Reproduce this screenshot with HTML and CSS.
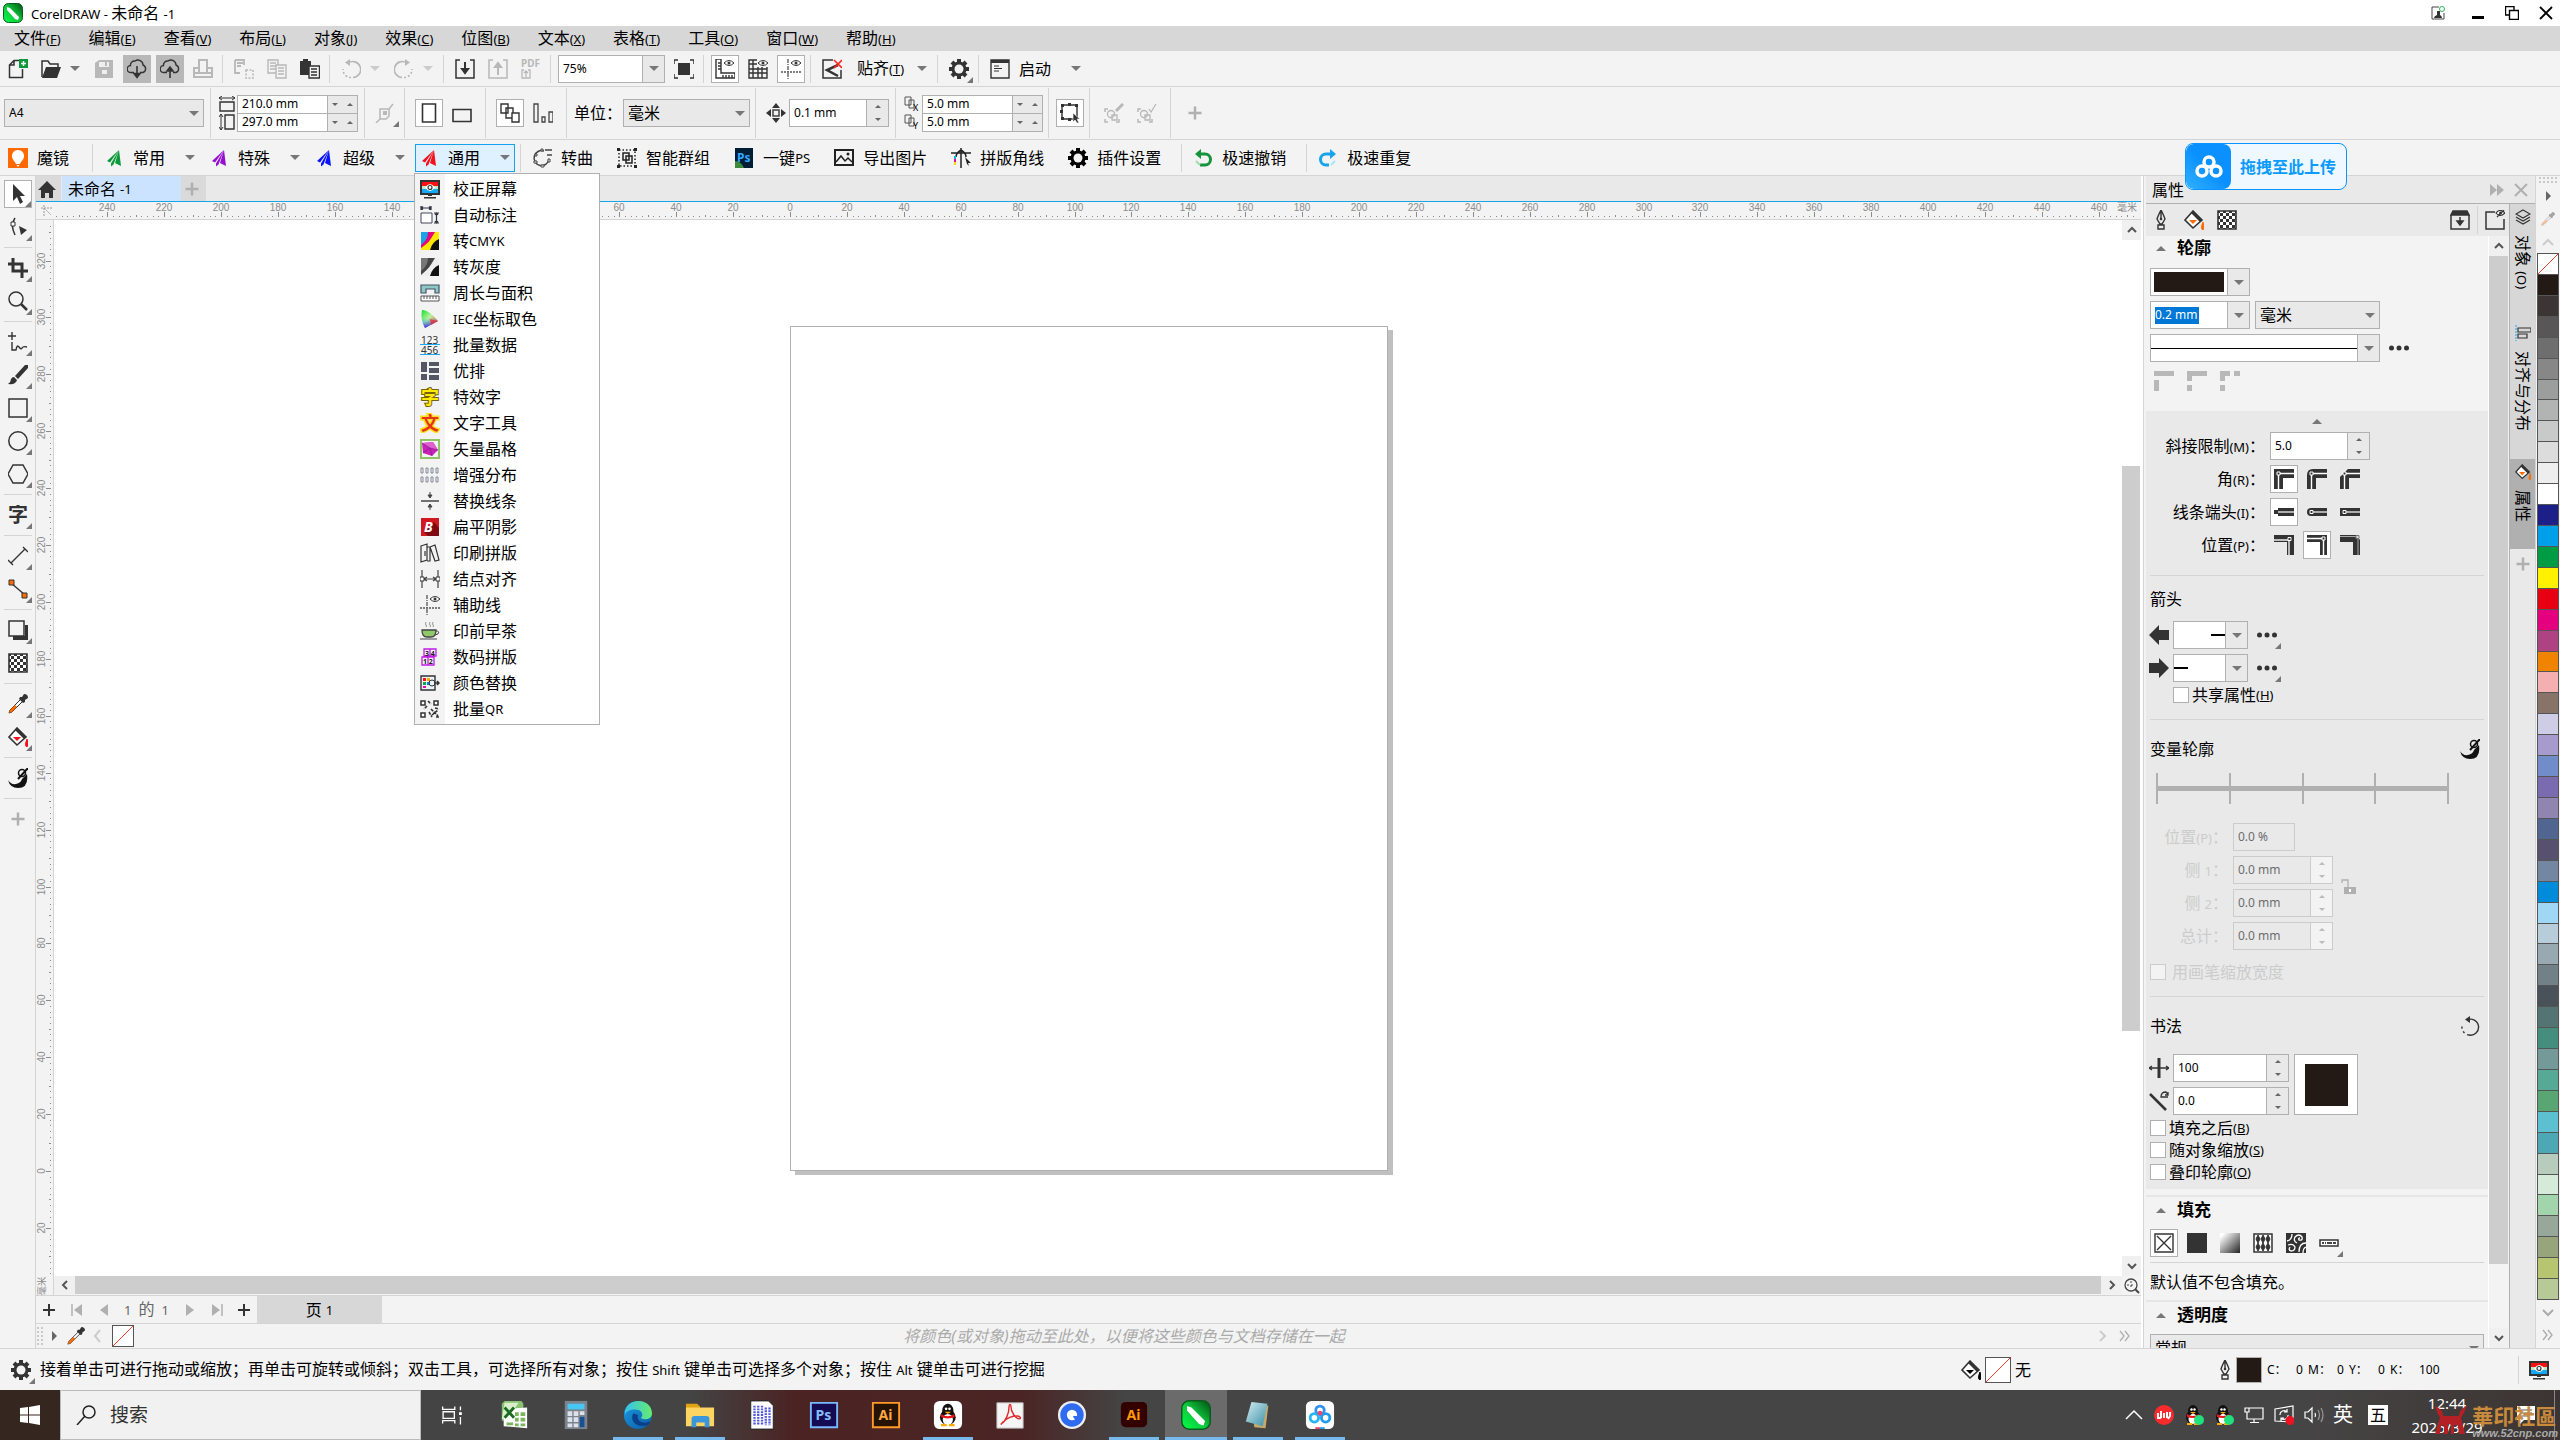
FILE: index.html
```html
<!DOCTYPE html>
<html lang="zh-CN">
<head>
    <meta charset="UTF-8">
    <meta name="viewport" content="width=device-width, initial-scale=1.0">
    <title>CorelDRAW - 未命名 -1</title>
    <link rel="stylesheet" href="styles.css">
</head>
<body>
    <!-- Gradients used by the icons -->
    <svg class="paints" aria-hidden="true">
        <defs>
            <linearGradient id="g-green" x1="0" y1="1" x2="1" y2="0"><stop offset="0" stop-color="#00ff48"/><stop offset=".5" stop-color="#0fc63d"/><stop offset="1" stop-color="#004d12"/></linearGradient>
            <linearGradient id="g-fade" x1="0" y1="0" x2="1" y2="1"><stop offset=".1" stop-color="#fff"/><stop offset="1" stop-color="#222"/></linearGradient>
            <linearGradient id="g-cie" x1="0" y1="0" x2="1" y2="1"><stop offset="0" stop-color="#10e030"/><stop offset=".45" stop-color="#c0f0a0"/><stop offset="1" stop-color="#f01020"/></linearGradient>
            <linearGradient id="g-cie2" x1="0" y1="0" x2="0" y2="1"><stop offset=".4" stop-color="#20e0e0" stop-opacity="0"/><stop offset="1" stop-color="#3a20f8"/></linearGradient>
            <linearGradient id="g-edge" x1="0" y1="0" x2="1" y2="1"><stop offset="0" stop-color="#1b9de2"/><stop offset="1" stop-color="#0c59a4"/></linearGradient>
            <linearGradient id="g-edge2" x1="0" y1="0" x2="1" y2="0"><stop offset="0" stop-color="#35c1f1"/><stop offset="1" stop-color="#66eb6e"/></linearGradient>
            <linearGradient id="g-glass" x1="0" y1="0" x2="1" y2="1"><stop offset="0" stop-color="#d4eef2"/><stop offset="1" stop-color="#3a8fa6"/></linearGradient>
            <pattern id="p-check" width="6" height="6" patternUnits="userSpaceOnUse"><rect width="6" height="6" fill="#fff"/><path d="M0 0h3v3H0zM3 3h3v3H3z" fill="#333"/></pattern>
        </defs>
    </svg>
    <!-- Icon sprite -->
    <svg class="sprite" aria-hidden="true">
        <symbol id="i-corel" viewBox="0 0 20 20"><rect x=".5" y=".5" width="19" height="19" rx="5" fill="url(#g-green)" stroke="#0a5c1c"/><path d="M4 4l3 1 9 9-1 3-3-1-8-9z" fill="#fff"/></symbol>
        <symbol id="i-new" viewBox="0 0 20 20"><path d="M11 1.500H6L1.500 6v12.500h13V10M6 1v5H1" fill="none" stroke="#333" stroke-width="1.500"/><path d="M11 0h9v9h-9z" fill="#0a9a3a"/><path d="M15.500 2v5M13 4.500h5" stroke="#fff" stroke-width="1.500"/></symbol>
        <symbol id="i-open" viewBox="0 0 20 20"><path d="M1 18V2h6l2 3h8v3" fill="none" stroke="#333" stroke-width="1.500"/><path d="M5 8h15l-4 11H1z" fill="#333"/></symbol>
        <symbol id="i-save" viewBox="0 0 20 20"><path d="M1 4l4-3h14v18H1z" fill="#b8b8b8"/><path d="M5 3h10v5H5zM8 11h5v4H8z" fill="#efefef"/><path d="M11 3h2v4h-2z" fill="#b8b8b8"/></symbol>
        <symbol id="i-cloud-down" viewBox="0 0 20 20"><path d="M7 13.500H4a3.500 3.500 0 0 1-.5-7A4 4 0 0 1 8 2a5 5 0 0 1 8 4 4 4 0 0 1 0 7.500h-3" fill="none" stroke="#333" stroke-width="1.400"/><path d="M10 7v10M7 14.500l3 4 3-4z" fill="#333" stroke="#333" stroke-width="1.600"/></symbol>
        <symbol id="i-cloud-up" viewBox="0 0 20 20"><path d="M7 13.500H4a3.500 3.500 0 0 1-.5-7A4 4 0 0 1 8 2a5 5 0 0 1 8 4 4 4 0 0 1 0 7.500h-3" fill="none" stroke="#333" stroke-width="1.400"/><path d="M10 19V9M7 12l3-4 3 4z" fill="#333" stroke="#333" stroke-width="1.600"/></symbol>
        <symbol id="i-print" viewBox="0 0 20 20"><path d="M6 13V1h8v12M5 9H1v9h18V9h-4M1 14h18" fill="none" stroke="#b8b8b8" stroke-width="2"/></symbol>
        <symbol id="i-cut" viewBox="0 0 20 20"><path d="M1 1h9v5M1 1v13h5M3 4h6M3 7h4" fill="none" stroke="#b8b8b8" stroke-width="1.800"/><path d="M12 11h7v8h-7z" fill="none" stroke="#b8b8b8" stroke-width="1.500" stroke-dasharray="2 1.500"/></symbol>
        <symbol id="i-copy" viewBox="0 0 20 20"><path d="M1 1h10v13H1zM3 4h6M3 7h6M3 10h6" fill="none" stroke="#b8b8b8" stroke-width="1.400"/><path d="M9 6h10v13H9z" fill="#f3f3f3" stroke="#b8b8b8" stroke-width="1.400"/><path d="M11 9h6M11 12h6M11 15h6" stroke="#b8b8b8" stroke-width="1.400"/></symbol>
        <symbol id="i-paste" viewBox="0 0 20 20"><path d="M0 2h3V0h5v2h3v14H0z" fill="#333"/><path d="M9 7h10.500v12H9z" fill="#f3f3f3" stroke="#333" stroke-width="1.400"/><path d="M11 10h6M11 13h6M11 16h6" stroke="#333" stroke-width="1.400"/></symbol>
        <symbol id="i-undo" viewBox="0 0 20 20"><path d="M7 4a8 8 0 1 1 5 14.500" fill="none" stroke="#b8b8b8" stroke-width="1.600"/><path d="M10 18.500A8 8 0 0 1 2 10" fill="none" stroke="#b8b8b8" stroke-width="1.600" stroke-dasharray="2 2"/><path d="M9 0v7L4 3.500z" fill="#b8b8b8"/></symbol>
        <symbol id="i-redo" viewBox="0 0 20 20"><path d="M13 4a8 8 0 1 0-5 14.500" fill="none" stroke="#b8b8b8" stroke-width="1.600"/><path d="M10 18.500A8 8 0 0 0 18 10" fill="none" stroke="#b8b8b8" stroke-width="1.600" stroke-dasharray="2 2"/><path d="M11 0v7l5-3.500z" fill="#b8b8b8"/></symbol>
        <symbol id="i-reset" viewBox="0 0 20 20"><path d="M7 4a8 8 0 1 1 2 15" fill="none" stroke="#333" stroke-width="1.400"/><path d="M9 19A8 8 0 0 1 2 10" fill="none" stroke="#333" stroke-width="1.400" stroke-dasharray="2 3"/><path d="M10 0v7L5 3.500z" fill="#333"/></symbol>
        <symbol id="i-import" viewBox="0 0 20 20"><path d="M5 1H1v18h18V1h-4" fill="none" stroke="currentColor" stroke-width="1.500"/><path d="M10 3v8M7 10l3 4 3-4z" fill="currentColor" stroke="currentColor" stroke-width="2"/></symbol>
        <symbol id="i-export" viewBox="0 0 20 20"><path d="M5 1H1v18h18V1h-4" fill="none" stroke="currentColor" stroke-width="1.500"/><path d="M10 16V7M7 8l3-4 3 4z" fill="currentColor" stroke="currentColor" stroke-width="2"/></symbol>
        <symbol id="i-pdf" viewBox="0 0 20 20"><text x="0" y="8" font-size="10" fill="#b8b8b8" font-weight="bold">PDF</text><path d="M3 11H1v8h8v-8H7M5 18v-6M3 14l2-2 2 2" fill="none" stroke="#b8b8b8" stroke-width="1.300"/></symbol>
        <symbol id="i-full" viewBox="0 0 20 20"><path d="M4 4h12v12H4z" fill="#333"/><path d="M0 5V1h4M16 1h4v4M20 15v4h-4M4 19H0v-4" fill="none" stroke="#333" stroke-width="1.500"/></symbol>
        <symbol id="i-rulers" viewBox="0 0 20 20"><path d="M1 0v19h19v-5H6V0zM3 4h3M3 7h3M3 10h3M8 16v3M11 16v3M14 16v3M17 16v3" fill="none" stroke="#333" stroke-width="1.400"/><path d="M9 4q5-5 10 0-5 5-10 0z" fill="#fff" stroke="#333"/><circle cx="14" cy="4" r="1.500" fill="#333"/></symbol>
        <symbol id="i-grid" viewBox="0 0 20 20"><path d="M1 1h18v18H1zM1 5h18M1 10h18M1 14h18M5 1v18M10 1v18M14 1v18" fill="none" stroke="#333" stroke-width="1.400"/><path d="M9 0h11v8H9z" fill="#f3f3f3"/><path d="M10 4q5-5 10 0-5 5-10 0z" fill="#fff" stroke="#333"/><circle cx="15" cy="4" r="1.500" fill="#333"/></symbol>
        <symbol id="i-guides" viewBox="0 0 20 20"><path d="M7 0v20" stroke="#555" stroke-width="1.300" stroke-dasharray="4 1 1 1"/><path d="M0 13h20" stroke="#555" stroke-width="1.300" stroke-dasharray="2 1"/><path d="M10 4q5-5 10 0-5 5-10 0z" fill="#fff" stroke="#333"/><circle cx="15" cy="4" r="1.500" fill="#333"/></symbol>
        <symbol id="i-snapoff" viewBox="0 0 20 20"><path d="M11 1H1v18h18V11" fill="none" stroke="#333" stroke-width="1.500"/><path d="M16 6L5 11l11 6" fill="none" stroke="#333" stroke-width="2.500"/><path d="M12 1l8 8M20 1l-8 8" stroke="#f22" stroke-width="1.600"/></symbol>
        <symbol id="i-gear" viewBox="0 0 20 20"><path d="M10 0v20M0 10h20M3 3l14 14M17 3L3 17" stroke="currentColor" stroke-width="4"/><circle cx="10" cy="10" r="7.500" fill="currentColor"/><circle cx="10" cy="10" r="4.500" fill="#f3f3f3"/></symbol>
        <symbol id="i-launch" viewBox="0 0 20 20"><path d="M1 1h18v18H1z" fill="none" stroke="#333" stroke-width="1.400"/><path d="M1 1h18v3H1z" fill="#333"/><path d="M4 7h5M4 9.500h8M4 12h5" stroke="#333"/></symbol>
        <!-- property bar -->
        <symbol id="i-pw" viewBox="0 0 16 16"><path d="M0 2h16M3 0L0 2l3 2M13 0l3 2-3 2" fill="none" stroke="#333"/><path d="M1 6h14v9H1z" fill="none" stroke="#333" stroke-width="1.400"/></symbol>
        <symbol id="i-ph" viewBox="0 0 16 16"><path d="M2 0v16M0 3l2-3 2 3M0 13l2 3 2-3" fill="none" stroke="#333"/><path d="M6 1h9v14H6z" fill="none" stroke="#333" stroke-width="1.400"/></symbol>
        <symbol id="i-node" viewBox="0 0 20 20"><path d="M5 6h9v7l-3 3H5zM14 6l4-5M5 16l-4 4" fill="none" stroke="#b8b8b8" stroke-width="1.500"/><path d="M8 8h4v4H8z" fill="#b8b8b8"/></symbol>
        <symbol id="i-port" viewBox="0 0 20 20"><path d="M3.500 1h13v18h-13z" fill="#fff" stroke="#333" stroke-width="1.600"/></symbol>
        <symbol id="i-land" viewBox="0 0 20 20"><path d="M1 6.500h18v12H1z" fill="none" stroke="#333" stroke-width="1.600"/></symbol>
        <symbol id="i-pages" viewBox="0 0 20 20"><path d="M1 1h7v9H1zM6 5h7v10H6z" fill="#fff" stroke="#333" stroke-width="1.400"/><path d="M12 10h7v9h-7z" fill="#fff" stroke="#333" stroke-width="1.400"/></symbol>
        <symbol id="i-bars" viewBox="0 0 20 20"><path d="M1 1h4v18H1zM9 14h3v5H9zM16 9h4v10h-4z" fill="none" stroke="#444" stroke-width="1.300"/></symbol>
        <symbol id="i-nudge" viewBox="0 0 20 20"><path d="M10 0l4 5H6zM10 20l4-5H6zM0 10l5-4v8zM20 10l-5-4v8z" fill="#333"/><path d="M7 7h6v6H7z" fill="none" stroke="#444" stroke-width="1.500"/></symbol>
        <symbol id="i-dup" viewBox="0 0 16 16"><path d="M1 1h6v8H1zM5 4h5v8H5z" fill="#f3f3f3" stroke="#555"/></symbol>
        <symbol id="i-bound" viewBox="0 0 20 20"><path d="M2 2h15v14H2z" fill="none" stroke="#333" stroke-width="1.400"/><path d="M1 1h3v3H1zM8 0h3v3H8zM15 1h3v3h-3zM1 14h3v3H1zM8 15h3v3H8zM0 7h3v3H0z" fill="#333"/><path d="M13 10l7 6h-3l2 4-2 0-2-3-2 2z" fill="#333" stroke="#fff" stroke-width=".6"/></symbol>
        <symbol id="i-setedit" viewBox="0 0 20 20"><path d="M1 9V6h3M1 16v3h3M15 16v3h-3" fill="none" stroke="#b8b8b8" stroke-width="1.500"/><circle cx="7" cy="11" r="3.500" fill="none" stroke="#b8b8b8" stroke-width="1.300"/><path d="M8 12h5v5H8z" fill="none" stroke="#b8b8b8" stroke-width="1.300"/><path d="M12 8l7-7" stroke="#b8b8b8" stroke-width="3"/></symbol>
        <symbol id="i-setok" viewBox="0 0 20 20"><path d="M1 9V6h3M1 16v3h3M15 16v3h-3" fill="none" stroke="#b8b8b8" stroke-width="1.500"/><circle cx="7" cy="11" r="3.500" fill="none" stroke="#b8b8b8" stroke-width="1.300"/><path d="M8 12h5v5H8z" fill="none" stroke="#b8b8b8" stroke-width="1.300"/><path d="M12 6l2 3 5-8" fill="none" stroke="#b8b8b8" stroke-width="1.300"/></symbol>
        <symbol id="i-plus" viewBox="0 0 20 20"><path d="M10 3.500v13M3.500 10h13" stroke="#b0b0b0" stroke-width="2.500"/></symbol>
        <!-- plugin bar -->
        <symbol id="i-mirror" viewBox="0 0 20 20"><path d="M0 0h20v20H0z" fill="#ff6a00"/><path d="M10 2c4 0 6 3 6 6 0 4-3 5-4 8H8c-1-3-4-4-4-8 0-3 2-6 6-6zM8.500 17h3l-1.500 2z" fill="#fff"/></symbol>
        <symbol id="i-plane" viewBox="0 0 20 20"><path d="M15 2L3 13l3 1.500zM15 2L7 15.500v3l2.500-2zM15 2l2 16-6-3z" fill="currentColor"/></symbol>
        <symbol id="i-curve" viewBox="0 0 20 20"><path d="M12 3a7.500 7.500 0 1 0 5 8" fill="none" stroke="#444" stroke-width="1.500"/><path d="M13 2h7M15 7h5" stroke="#444" stroke-width="1.500"/><path d="M9 1h2v2H9zM3 6h2v2H3zM2 13h3v2H2zM9 17h3v2H9zM16 11h2v3h-2z" stroke="#444" fill="#fff"/></symbol>
        <symbol id="i-group" viewBox="0 0 20 20"><path d="M2 2h16v16H2z" fill="none" stroke="#222" stroke-width="1.500" stroke-dasharray="1.500 2"/><path d="M0 0h3v3H0zM17 0h3v3h-3zM0 17h3v3H0zM17 17h3v3h-3z" fill="#222"/><path d="M6 5h6v7H6zM9 8h6v7H9z" fill="none" stroke="#222" stroke-width="1.500"/></symbol>
        <symbol id="i-pssmall" viewBox="0 0 20 20"><path d="M1 0h18v20H1z" fill="#001d34"/><path d="M1 13q6 0 9 7H1z" fill="#3c8a3a"/><text x="3" y="14" font-size="12" font-weight="bold" fill="#31a8ff">Ps</text></symbol>
        <symbol id="i-pic" viewBox="0 0 20 20"><path d="M1 2h18v15H1z" fill="none" stroke="#222" stroke-width="2"/><path d="M2 14l5-6 4 5 3-3 4 4" fill="none" stroke="#222" stroke-width="1.500"/><circle cx="14" cy="6" r="1.500" fill="#222"/></symbol>
        <symbol id="i-crop" viewBox="0 0 20 20"><path d="M10 0v20M0 5h20M5 9q0-4 5-7 5 3 5 7" fill="none" stroke="#222" stroke-width="1.500"/><path d="M14 9l6 6h-3l1 3-2-2z" fill="#222"/><path d="M3 8h2v3H3z" fill="#0bd"/><path d="M3 11h2v3H3z" fill="#e0a"/><path d="M3 14h2v3H3z" fill="#fd0"/></symbol>
        <symbol id="i-qundo" viewBox="0 0 20 20"><path d="M7 17h5a5 5 0 0 0 0-11H6" fill="none" stroke="#16943c" stroke-width="3"/><path d="M8 1v10L2 6z" fill="#16943c"/><path d="M3 13l4 4" stroke="#9fdcae" stroke-width="2"/></symbol>
        <symbol id="i-qredo" viewBox="0 0 20 20"><path d="M11 17H8A5 5 0 0 1 8 6h6" fill="none" stroke="#18a4ea" stroke-width="3"/><path d="M12 1v10l6-5z" fill="#18a4ea"/><path d="M17 13l-4 4" stroke="#a5e6fa" stroke-width="2"/></symbol>
        <!-- drop-down menu -->
        <symbol id="m-screen" viewBox="0 0 20 20"><path d="M0 1h20v15H0z" fill="#333"/><path d="M2 3h16v4H2z" fill="#f11"/><path d="M2 7h16v3H2z" fill="#bfe6c8"/><path d="M2 10h16v4H2z" fill="#15a9f5"/><path d="M5 8.500q5-7 10 0-5 7-10 0z" fill="#fff"/><circle cx="10" cy="8.500" r="2" fill="none" stroke="#333" stroke-width="1.200"/><path d="M8 16h4v1H8zM4 18h12v1.500H4z" fill="#333"/></symbol>
        <symbol id="m-dim" viewBox="0 0 20 20"><path d="M1 8h11v10H1z" fill="#fff" stroke="#445" stroke-width="1"/><path d="M1 1v4M11 1v4M1 3h10M3 1.500L1 3l2 1.500M9 1.500L11 3 9 4.500M14 8h5M14 18h5M16.500 8v10M15 10l1.500-2 1.500 2M15 16l1.500 2 1.500-2" fill="none" stroke="#334" stroke-width="1.200"/></symbol>
        <symbol id="m-cmyk" viewBox="0 0 20 20"><path d="M1 1h18v18H1z" fill="#ffe800"/><path d="M1 1h9q-1 8-9 14z" fill="#1aa3e8"/><path d="M8 1h7q-3 5-5 8t-9 8v-3Q8 9 8 1z" fill="#e6007e"/><path d="M19 8q-7 3-9 11h9z" fill="#111"/></symbol>
        <symbol id="m-gray" viewBox="0 0 20 20"><path d="M1 1h18v18H1z" fill="#eee"/><path d="M1 1h9q-1 8-9 14z" fill="#777"/><path d="M8 1h7q-3 5-5 8t-9 9v-4Q8 9 8 1z" fill="#444"/><path d="M19 8q-7 3-9 11h9z" fill="#111"/></symbol>
        <symbol id="m-area" viewBox="0 0 20 20"><path d="M1 2h18v8h-4V6H6v4H1z" fill="#8fc7c4" stroke="#456" stroke-width="1.200"/><path d="M1 13h18v5H1zM4 13v3M7 13v3M10 13v3M13 13v3M16 13v3" fill="#fff" stroke="#555"/></symbol>
        <symbol id="m-cie" viewBox="0 0 20 20"><path d="M2 1q-2 9 3 18l13-7Q8 0 2 1z" fill="url(#g-cie)"/><path d="M2 1q-2 9 3 18l13-7Q8 0 2 1z" fill="url(#g-cie2)"/><path d="M10 10l8 2-7 4z" fill="#f02030" opacity=".7"/></symbol>
        <symbol id="m-123" viewBox="0 0 20 20"><text x="1" y="9" font-size="10" fill="#333">123</text><text x="1" y="19" font-size="10" fill="#333">456</text><path d="M0 9.500h20M0 19.500h20" stroke="#15a9f5"/></symbol>
        <symbol id="m-layout" viewBox="0 0 20 20"><path d="M1 1h6v10H1zM1 13h6v6H1zM9 1h10v4H9zM9 7h10v5H9zM9 14h10v5H9z" fill="#556"/></symbol>
        <symbol id="m-zi" viewBox="0 0 20 20"><text x="1" y="17" font-size="18" font-weight="bold" fill="#ffea00" stroke="#76600a" stroke-width="2" paint-order="stroke">字</text></symbol>
        <symbol id="m-wen" viewBox="0 0 20 20"><text x="1" y="17" font-size="18" font-weight="bold" fill="#e8321c" stroke="#ffe21a" stroke-width="3" paint-order="stroke">文</text></symbol>
        <symbol id="m-crystal" viewBox="0 0 20 20"><path d="M1 1h18v18H1z" fill="#f4f4f4" stroke="#8fc466" stroke-width="2"/><path d="M2 4l11-1 5 8-6 6-9-3z" fill="#c822b8"/><path d="M2 4l11-1 5 8-8-2z" fill="#e060d0"/><path d="M2 4l8 5 8 2M10 9l-7 5M10 9l2 8" stroke="#8a1590" fill="none" stroke-width=".7"/></symbol>
        <symbol id="m-dist" viewBox="0 0 20 20"><path d="M1 3h2v5H1zM6 3h2v5H6zM11 3h2v5h-2zM16 3h2v5h-2zM1 12h2v5H1zM6 12h2v5H6zM11 12h2v5h-2zM16 12h2v5h-2z" fill="none" stroke="#889"/></symbol>
        <symbol id="m-line" viewBox="0 0 20 20"><path d="M1 10h18" stroke="#444" stroke-width="1.500"/><path d="M10 1v4M10 19v-4M8 4h4l-2 3zM8 16h4l-2-3z" stroke="#444" fill="#444"/></symbol>
        <symbol id="m-b" viewBox="0 0 20 20"><path d="M1 1h18v18H1z" fill="#d01820"/><path d="M14 5l5 6v8H8l-4-4z" fill="#7d0a10"/><text x="4" y="15" font-size="14" font-weight="bold" font-style="italic" fill="#fff">B</text></symbol>
        <symbol id="m-book" viewBox="0 0 20 20"><path d="M1 3l6-2v16l-6 2zM7 4h3v14H7M10 4l5 14 4-1-4-15-5 2M5 8v5" fill="none" stroke="#333" stroke-width="1.200"/></symbol>
        <symbol id="m-nodes" viewBox="0 0 20 20"><path d="M2 1v18M18 1v18M4 10h12M7 8l-3 2 3 2M13 8l3 2-3 2" fill="none" stroke="#444" stroke-width="1.200"/><path d="M0 8h4v4H0zM16 8h4v4h-4z" fill="#fff" stroke="#333"/></symbol>
        <symbol id="m-tea" viewBox="0 0 20 20"><path d="M2 9h14q0 7-5 7H7Q2 16 2 9z" fill="#8fc96a" stroke="#444" stroke-width="1.300"/><path d="M16 10q4 0 2 3l-3 1M0 18h17" fill="none" stroke="#444"/><path d="M6 1q-1 2 0 3t0 2M10 1q-1 2 0 3t0 2M13 1q-1 2 0 3t0 2" fill="none" stroke="#777" stroke-width=".8"/></symbol>
        <symbol id="m-num" viewBox="0 0 20 20"><path d="M4 2h12v7H4zM2 10h12v8H2zM10 2v7M8 10v8" fill="none" stroke="#c21be8" stroke-width="1.300"/><text x="5" y="9" font-size="7" font-weight="bold" fill="#222">3 4</text><text x="3" y="17" font-size="7" font-weight="bold" fill="#222">1 2</text></symbol>
        <symbol id="m-repl" viewBox="0 0 20 20"><path d="M1 3h14v14H1z" fill="#e9f5fa" stroke="#333" stroke-width="1.400"/><path d="M3 5h3v3H3z" fill="#f11"/><path d="M7 5h3v3H7z" fill="#fa0"/><path d="M3 9h3v3H3z" fill="#1a4"/><path d="M7 9h3v3H7z" fill="#08d"/><path d="M3 13h3v2H3z" fill="#e0a"/><circle cx="12" cy="10" r="3" fill="none" stroke="#333"/><path d="M15 10h4M17 8l2 2-2 2" stroke="#333" stroke-width="1.500" fill="none"/></symbol>
        <symbol id="m-qr" viewBox="0 0 20 20"><path d="M1 2h4v4H1zM14 2h4v4h-4zM1 14h4v4H1z" fill="#fff" stroke="#333" stroke-width="1.500"/><path d="M8 2l3 3M7 7l-3 3M11 10l7 7M12 16l6-5M9 13l3 5M15 9l4 1M16 18h3" stroke="#333" stroke-width="1.600" stroke-dasharray="3 1"/></symbol>
        <!-- toolbox -->
        <symbol id="t-pick" viewBox="0 0 20 20"><path d="M5 0v17l4-4 3 7 3-2-3-6h5z" fill="#333"/></symbol>
        <symbol id="t-shape" viewBox="0 0 20 20"><path d="M7 1Q2 8 7 18" fill="none" stroke="#333" stroke-width="1.500"/><path d="M3 5h4v4H3z" fill="#fff" stroke="#333"/><path d="M11 9l8 4-6 5z" fill="#333"/></symbol>
        <symbol id="t-crop" viewBox="0 0 20 20"><path d="M5 0v13h15M0 6h14v14" fill="none" stroke="#333" stroke-width="3"/></symbol>
        <symbol id="t-zoom" viewBox="0 0 20 20"><circle cx="8" cy="8" r="7" fill="none" stroke="#333" stroke-width="1.500"/><path d="M13 13l6 6" stroke="#333" stroke-width="2.500"/></symbol>
        <symbol id="t-free" viewBox="0 0 20 20"><path d="M4 0v8M0 4h8M4 10v8h4q1-6 3-3t3 1 5-1" fill="none" stroke="#333" stroke-width="1.400"/></symbol>
        <symbol id="t-brush" viewBox="0 0 20 20"><path d="M20 0v3L10 14l-3-3L17 0zM6 12l3 3q-1 5-9 4 3-2 3-5 1-2 3-2z" fill="#333"/></symbol>
        <symbol id="t-rect" viewBox="0 0 20 20"><path d="M1 1h18v18H1z" fill="none" stroke="#333" stroke-width="1.500"/></symbol>
        <symbol id="t-ell" viewBox="0 0 20 20"><circle cx="10" cy="10" r="9.200" fill="none" stroke="#333" stroke-width="1.500"/></symbol>
        <symbol id="t-poly" viewBox="0 0 20 20"><path d="M5 1h10l5 9-5 9H5l-5-9z" fill="none" stroke="#333" stroke-width="1.500"/></symbol>
        <symbol id="t-text" viewBox="0 0 20 20"><text x="0" y="17" font-size="20" font-weight="bold" fill="#333">字</text></symbol>
        <symbol id="t-dim" viewBox="0 0 20 20"><path d="M3 17L17 3M0 14l5 5M15 1l5 5" fill="none" stroke="#333" stroke-width="1.400"/></symbol>
        <symbol id="t-conn" viewBox="0 0 20 20"><path d="M3 4l14 12" stroke="#333" stroke-width="1.400"/><path d="M1 1h5v5H1zM14 14h5v5h-5z" fill="#ff6a00" stroke="#333"/></symbol>
        <symbol id="t-shadow" viewBox="0 0 20 20"><path d="M5 16v4h15V5h-3v11z" fill="#333"/><path d="M1 1h15v15H1z" fill="#f3f3f3" stroke="#333" stroke-width="1.500"/></symbol>
        <symbol id="t-check" viewBox="0 0 20 20"><path d="M1 1h18v18H1z" fill="url(#p-check)" stroke="#333" stroke-width="1.600"/></symbol>
        <symbol id="t-drop" viewBox="0 0 20 20"><path d="M1 19l1-3L13 5l2 2L4 18z" fill="#fff" stroke="#333"/><path d="M1 19l1-3 5-5 2 2-5 5z" fill="#ff6a00"/><path d="M12 3l2 0 2-3q4 0 4 4l-3 2v2l-2 1-4-4z" fill="#333"/></symbol>
        <symbol id="t-fill" viewBox="0 0 20 20"><path d="M1 10l8-9 9 9-9 8z" fill="#fff" stroke="#333" stroke-width="1.600"/><path d="M9 1l9 9-2 2-9-9z" fill="#333"/><path d="M5 10h8l-4 4z" fill="currentColor"/><path d="M19 12q2 6 0 8-3-1 0-8z" fill="currentColor" stroke="currentColor"/></symbol>
        <symbol id="t-pen" viewBox="0 0 20 20"><path d="M0 12q3 5 8 4t6-5l5-5q2 14-9 14Q2 20 0 12z" fill="#111"/><path d="M10 11l10-11" stroke="#111" stroke-width="2"/><circle cx="14" cy="5" r="3.500" fill="none" stroke="#111" stroke-width="1.500"/></symbol>
        <!-- panel -->
        <symbol id="i-nib" viewBox="0 0 20 20"><path d="M10 0q-3 6-4 9l3 5h2l3-5q-1-3-4-9zM10 2v7M7 15h6v4H7z" fill="none" stroke="#333" stroke-width="1.400"/><circle cx="10" cy="9" r="1.300" fill="#333"/></symbol>
        <symbol id="i-boxin" viewBox="0 0 20 20"><path d="M1 5v14h18V5zM3 1h14l2 4H1z" fill="none" stroke="#333" stroke-width="1.500"/><path d="M2 1h16v4H2z" fill="#333"/><path d="M10 7v6M7 11l3 4 3-4z" fill="#333" stroke="#333" stroke-width="1.500"/></symbol>
        <symbol id="i-boxeye" viewBox="0 0 20 20"><path d="M10 2H1v17h18V9" fill="none" stroke="#333" stroke-width="1.500"/><path d="M11 3q4-5 9 0-5 5-9 0zM12 7l7-7" fill="#fff" stroke="#333" stroke-width="1.200"/><circle cx="15.500" cy="3" r="1.500" fill="#333"/></symbol>
        <symbol id="i-dash1" viewBox="0 0 20 20"><path d="M0 0h20v5H0zM0 9h5v11H0z" fill="#b8b8b8"/></symbol>
        <symbol id="i-dash2" viewBox="0 0 20 20"><path d="M0 0h20v5H5v5H0zM0 14h5v6H0z" fill="#b8b8b8"/></symbol>
        <symbol id="i-dash3" viewBox="0 0 20 20"><path d="M0 0h10v5H5v5H0zM14 0h6v5h-6zM0 14h5v6H0z" fill="#b8b8b8"/></symbol>
        <symbol id="i-dots" viewBox="0 0 20 20"><circle cx="2.500" cy="10" r="2.500" fill="#333"/><circle cx="10" cy="10" r="2.500" fill="#333"/><circle cx="17.500" cy="10" r="2.500" fill="#333"/></symbol>
        <symbol id="i-cor1" viewBox="0 0 20 20"><path d="M0 0h20v9H9v11H0z" fill="#333"/><path d="M20 4.500H4.500V20" fill="none" stroke="#fff" stroke-width="1.400"/><path d="M3 3h3v3H3z" fill="#333" stroke="#fff"/></symbol>
        <symbol id="i-cor2" viewBox="0 0 20 20"><path d="M6 0h14v9H9v11H0V6q0-6 6-6z" fill="#333"/><path d="M20 4.500H4.500V20" fill="none" stroke="#fff" stroke-width="1.400"/><path d="M3 3h3v3H3z" fill="#333" stroke="#fff"/></symbol>
        <symbol id="i-cor3" viewBox="0 0 20 20"><path d="M8 0h12v9H9v11H0V8z" fill="#333"/><path d="M20 4.500H4.500V20" fill="none" stroke="#fff" stroke-width="1.400"/><path d="M3 3h3v3H3z" fill="#333" stroke="#fff"/></symbol>
        <symbol id="i-cap1" viewBox="0 0 20 20"><path d="M4 6h16v8H4zM0 8h4v4H0z" fill="#333"/><path d="M4 10h16" stroke="#fff" stroke-width="1.200"/></symbol>
        <symbol id="i-cap2" viewBox="0 0 20 20"><path d="M4 6h16v8H4q-4 0-4-4t4-4z" fill="#333"/><path d="M4 10h16" stroke="#fff" stroke-width="1.200"/><path d="M3 8.500h3v3H3z" fill="#333" stroke="#fff"/></symbol>
        <symbol id="i-cap3" viewBox="0 0 20 20"><path d="M0 6h20v8H0z" fill="#333"/><path d="M4 10h16" stroke="#fff" stroke-width="1.200"/><path d="M3 8.500h3v3H3z" fill="#333" stroke="#fff"/></symbol>
        <symbol id="i-pos1" viewBox="0 0 20 20"><path d="M0 0h20v20h-7V7H0z" fill="#333"/><path d="M0 5h15v15" fill="none" stroke="#eee" stroke-width="1.400"/><path d="M14 2.500h3v3h-3z" fill="#333" stroke="#fff"/></symbol>
        <symbol id="i-pos2" viewBox="0 0 20 20"><path d="M0 0h20v20h-7V7H0z" fill="#333"/><path d="M0 3.500h16.500V20" fill="none" stroke="#fff" stroke-width="1.400"/><path d="M15 2h3v3h-3z" fill="#333" stroke="#fff"/></symbol>
        <symbol id="i-pos3" viewBox="0 0 20 20"><path d="M0 0h16l4 5v15h-7V7H0z" fill="#333"/><path d="M0 1.500h18V20" fill="none" stroke="#aaa" stroke-width="1"/><path d="M16 .5h3v3h-3z" fill="#ddd" stroke="#777"/></symbol>
        <symbol id="i-aleft" viewBox="0 0 20 20"><path d="M0 10L10 0v5h10v10H10v5z" fill="#333"/></symbol>
        <symbol id="i-aright" viewBox="0 0 20 20"><path d="M20 10L10 0v5H0v10h10v5z" fill="#333"/></symbol>
        <symbol id="i-lock" viewBox="0 0 16 16"><path d="M3 8h12v7H3z" fill="#b0b0b0"/><path d="M7 8V1H1v3" fill="none" stroke="#b0b0b0" stroke-width="1.300"/><path d="M8 10h2v3H8z" fill="#fff"/></symbol>
        <symbol id="i-stretch" viewBox="0 0 20 20"><path d="M10 0v20" stroke="#333" stroke-width="3"/><path d="M0 10h20M3 8l-3 2 3 2M17 8l3 2-3 2" fill="none" stroke="#333" stroke-width="1.300"/></symbol>
        <symbol id="i-tilt" viewBox="0 0 20 20"><path d="M1 3l16 16" stroke="#333" stroke-width="2.500"/><path d="M19 6h-7q0-5 5-5l2 3M19 1v3h-3" fill="none" stroke="#333" stroke-width="1.300"/></symbol>
        <symbol id="i-f0" viewBox="0 0 20 20"><path d="M1 1h18v18H1zM3 3l14 14M17 3L3 17" fill="#fff" stroke="#333" stroke-width="1.400"/></symbol>
        <symbol id="i-f1" viewBox="0 0 20 20"><path d="M0 0h20v20H0z" fill="#333"/></symbol>
        <symbol id="i-f2" viewBox="0 0 20 20"><path d="M0 0h20v20H0z" fill="url(#g-fade)"/></symbol>
        <symbol id="i-f3" viewBox="0 0 20 20"><path d="M1 1h18v18H1z" fill="#fff" stroke="#333" stroke-width="1.500"/><path d="M5 2l2 4-2 4-2-4zM10 2l2 4-2 4-2-4zM15 2l2 4-2 4-2-4zM5 10l2 4-2 4-2-4zM10 10l2 4-2 4-2-4zM15 10l2 4-2 4-2-4z" fill="#333" stroke="#333"/></symbol>
        <symbol id="i-f4" viewBox="0 0 20 20"><path d="M0 0h20v20H0z" fill="#333"/><path d="M1 8q5-1 5-7M11 10q-4-2-2-6 4-4 7 0 1 4-3 3-1-2 1-2M2 12q5-2 7 2 0 4-4 4-3-1-1-4M20 10q-7 0-7 9M20 14q-3 1-3 6" fill="none" stroke="#fff" stroke-width="1.300"/></symbol>
        <symbol id="i-f5" viewBox="0 0 20 20"><path d="M1 7h18v6H1z" fill="#fff" stroke="#333" stroke-width="1.500"/><path d="M3 9h2v2H3zM6 9h1v2H6zM8 9h5v2H8zM14 9h3v2h-3z" fill="#444"/></symbol>
        <symbol id="i-layers" viewBox="0 0 16 16"><path d="M8 1l7 4-7 4-7-4zM1 8l7 4 7-4M1 11l7 4 7-4" fill="none" stroke="#333" stroke-width="1.200"/></symbol>
        <symbol id="i-align" viewBox="0 0 16 16"><path d="M1 0v16" stroke="#15a9f5" stroke-dasharray="2 1"/><path d="M3 3h13v4H3zM3 9h9v4H3z" fill="none" stroke="#333" stroke-width="1.200"/></symbol>
        <symbol id="i-home" viewBox="0 0 20 20"><path d="M10 2l9 9h-3v8h-4v-5H8v5H4v-8H1z" fill="#333"/></symbol>
        <symbol id="i-user" viewBox="0 0 14 14"><path d="M8 1H1v12h12V7" fill="none" stroke="#444"/><path d="M3 12q0-2 3-3V5h3v4q2 1 2 3z" fill="#333"/><circle cx="11" cy="3" r="2.500" fill="none" stroke="#35b558"/></symbol>
        <symbol id="i-zoomall" viewBox="0 0 16 16"><circle cx="7" cy="7" r="6" fill="none" stroke="#444" stroke-width="1.300"/><path d="M7 3v8M3 7h8" stroke="#444" stroke-dasharray="2 2"/><path d="M11 11l4 4" stroke="#444" stroke-width="2"/></symbol>
        <symbol id="i-cloud3" viewBox="0 0 28 28"><circle cx="14" cy="9" r="5" fill="none" stroke="#fff" stroke-width="3.500"/><circle cx="7" cy="18" r="5" fill="none" stroke="#fff" stroke-width="3.500"/><circle cx="21" cy="18" r="5" fill="none" stroke="#fff" stroke-width="3.500"/></symbol>
        <symbol id="i-qq" viewBox="0 0 20 20"><ellipse cx="9" cy="12" rx="7" ry="7" fill="#111"/><ellipse cx="9" cy="6" rx="5" ry="6" fill="#111"/><ellipse cx="9" cy="14" rx="4.500" ry="5" fill="#fff"/><circle cx="7.500" cy="4.500" r="1.200" fill="#fff"/><circle cx="10.500" cy="4.500" r="1.200" fill="#fff"/><path d="M6 7h6l-3 2z" fill="#fa0"/><path d="M3 9q6 4 12 0v3q-6 2-12 0z" fill="#e8151b"/><path d="M3 18h5v2H3zM10 18h5v2h-5z" fill="#fa0"/></symbol>
    </svg>

    <header class="titlebar">
        <svg class="icon"><use href="#i-corel"/></svg>
        <h1><span class="lt">CorelDRAW - </span>未命名 <span class="lt">-1</span></h1>
        <div class="window-buttons">
            <button class="account" aria-label="账户"><svg class="icon-s"><use href="#i-user"/></svg></button>
            <button aria-label="最小化"><svg class="icon-s" viewBox="0 0 14 14"><path d="M1 10h12v3H1z"/></svg></button>
            <button aria-label="还原"><svg class="icon-s" viewBox="0 0 14 14"><path d="M4 9H.5V.5H9V4M4.500 4.500h9v9h-9z" fill="none" stroke="#000" stroke-width="1.400"/></svg></button>
            <button aria-label="关闭"><svg class="icon-s" viewBox="0 0 14 14"><path d="M1 1l12 12M13 1L1 13" stroke="#000" stroke-width="1.800"/></svg></button>
        </div>
    </header>

    <nav class="menubar">
        <button>文件<span class="lt">(<u>F</u>)</span></button>
        <button>编辑<span class="lt">(<u>E</u>)</span></button>
        <button>查看<span class="lt">(<u>V</u>)</span></button>
        <button>布局<span class="lt">(<u>L</u>)</span></button>
        <button>对象<span class="lt">(<u>J</u>)</span></button>
        <button>效果<span class="lt">(<u>C</u>)</span></button>
        <button>位图<span class="lt">(<u>B</u>)</span></button>
        <button>文本<span class="lt">(<u>X</u>)</span></button>
        <button>表格<span class="lt">(<u>T</u>)</span></button>
        <button>工具<span class="lt">(<u>O</u>)</span></button>
        <button>窗口<span class="lt">(<u>W</u>)</span></button>
        <button>帮助<span class="lt">(<u>H</u>)</span></button>
    </nav>

    <!-- Standard toolbar -->
    <div class="toolbar">
        <button class="tool"><svg class="icon"><use href="#i-new"/></svg></button>
        <div class="split"><button class="tool"><svg class="icon"><use href="#i-open"/></svg></button><button class="drop"></button></div>
        <button class="tool"><svg class="icon"><use href="#i-save"/></svg></button>
        <button class="tool cloud"><svg class="icon"><use href="#i-cloud-down"/></svg></button>
        <button class="tool cloud"><svg class="icon"><use href="#i-cloud-up"/></svg></button>
        <button class="tool"><svg class="icon"><use href="#i-print"/></svg></button>
        <i class="sep"></i>
        <button class="tool"><svg class="icon"><use href="#i-cut"/></svg></button>
        <button class="tool"><svg class="icon"><use href="#i-copy"/></svg></button>
        <button class="tool"><svg class="icon"><use href="#i-paste"/></svg></button>
        <i class="sep"></i>
        <div class="split"><button class="tool"><svg class="icon"><use href="#i-undo"/></svg></button><button class="drop off"></button></div>
        <div class="split"><button class="tool"><svg class="icon"><use href="#i-redo"/></svg></button><button class="drop off"></button></div>
        <i class="sep"></i>
        <button class="tool"><svg class="icon"><use href="#i-import"/></svg></button>
        <button class="tool off"><svg class="icon"><use href="#i-export"/></svg></button>
        <button class="tool"><svg class="icon"><use href="#i-pdf"/></svg></button>
        <i class="sep"></i>
        <div class="field zoom-level"><input type="text" value="75%" aria-label="缩放级别"><button class="drop"></button></div>
        <button class="tool"><svg class="icon"><use href="#i-full"/></svg></button>
        <i class="sep"></i>
        <button class="tool on"><svg class="icon"><use href="#i-rulers"/></svg></button>
        <button class="tool"><svg class="icon"><use href="#i-grid"/></svg></button>
        <button class="tool on"><svg class="icon"><use href="#i-guides"/></svg></button>
        <i class="sep"></i>
        <button class="tool"><svg class="icon"><use href="#i-snapoff"/></svg></button>
        <div class="split"><button class="text-tool">贴齐<span class="lt">(<u>T</u>)</span></button><button class="drop"></button></div>
        <i class="sep"></i>
        <button class="tool fly"><svg class="icon"><use href="#i-gear"/></svg></button>
        <i class="sep"></i>
        <div class="split"><button class="labelled"><svg class="icon"><use href="#i-launch"/></svg>启动</button><button class="drop"></button></div>
    </div>

    <!-- Property bar -->
    <div class="toolbar property-bar">
        <div class="select page-size"><select aria-label="页面大小"><option>A4</option></select></div>
        <i class="sep flush"></i>
        <div class="pair">
            <div class="pair-icons"><svg class="icon-s"><use href="#i-pw"/></svg><svg class="icon-s"><use href="#i-ph"/></svg></div>
            <div class="pair-fields">
                <div class="field"><input type="text" value="210.0 mm" aria-label="宽度"><button class="step down"></button><button class="step up"></button></div>
                <div class="field"><input type="text" value="297.0 mm" aria-label="高度"><button class="step down"></button><button class="step up"></button></div>
            </div>
        </div>
        <i class="sep flush"></i>
        <button class="tool fly off"><svg class="icon"><use href="#i-node"/></svg></button>
        <i class="sep wide"></i>
        <button class="tool on"><svg class="icon"><use href="#i-port"/></svg></button>
        <button class="tool"><svg class="icon"><use href="#i-land"/></svg></button>
        <i class="sep wide both"></i>
        <button class="tool on"><svg class="icon"><use href="#i-pages"/></svg></button>
        <button class="tool"><svg class="icon"><use href="#i-bars"/></svg></button>
        <i class="sep both"></i>
        <label for="units">单位：</label>
        <div class="select units"><select id="units"><option>毫米</option></select></div>
        <i class="sep wide"></i>
        <svg class="icon"><use href="#i-nudge"/></svg>
        <div class="field nudge"><input type="text" value="0.1 mm" aria-label="微调距离"><span class="spin"><button></button><button></button></span></div>
        <i class="sep flush"></i>
        <div class="pair">
            <div class="pair-icons"><svg class="icon-s" viewBox="0 0 16 16"><use href="#i-dup"/><text x="9" y="15" font-size="9">X</text></svg><svg class="icon-s" viewBox="0 0 16 16"><use href="#i-dup"/><text x="9" y="15" font-size="9">Y</text></svg></div>
            <div class="pair-fields">
                <div class="field"><input type="text" value="5.0 mm" aria-label="再制距离 X"><button class="step down"></button><button class="step up"></button></div>
                <div class="field"><input type="text" value="5.0 mm" aria-label="再制距离 Y"><button class="step down"></button><button class="step up"></button></div>
            </div>
        </div>
        <i class="sep"></i>
        <button class="tool on"><svg class="icon"><use href="#i-bound"/></svg></button>
        <i class="sep wide"></i>
        <button class="tool"><svg class="icon"><use href="#i-setedit"/></svg></button>
        <button class="tool"><svg class="icon"><use href="#i-setok"/></svg></button>
        <i class="sep wide both"></i>
        <button class="tool"><svg class="icon"><use href="#i-plus"/></svg></button>
    </div>

    <!-- Plugin toolbar -->
    <div class="toolbar plugin-bar">
        <button class="labelled first"><svg class="icon"><use href="#i-mirror"/></svg>魔镜</button>
        <i class="sep"></i>
        <div class="split"><button class="labelled"><svg class="icon green"><use href="#i-plane"/></svg>常用</button><button class="drop"></button></div>
        <div class="split"><button class="labelled"><svg class="icon purple"><use href="#i-plane"/></svg>特殊</button><button class="drop"></button></div>
        <div class="split"><button class="labelled"><svg class="icon blue"><use href="#i-plane"/></svg>超级</button><button class="drop"></button></div>
        <div class="split open">
            <button class="labelled"><svg class="icon red"><use href="#i-plane"/></svg>通用</button><button class="drop"></button>
            <div class="dropdown">
                <button><svg class="icon"><use href="#m-screen"/></svg>校正屏幕</button>
                <button><svg class="icon"><use href="#m-dim"/></svg>自动标注</button>
                <button><svg class="icon"><use href="#m-cmyk"/></svg>转<span class="lt">CMYK</span></button>
                <button><svg class="icon"><use href="#m-gray"/></svg>转灰度</button>
                <button><svg class="icon"><use href="#m-area"/></svg>周长与面积</button>
                <button><svg class="icon"><use href="#m-cie"/></svg><span class="lt">IEC</span>坐标取色</button>
                <button><svg class="icon"><use href="#m-123"/></svg>批量数据</button>
                <button><svg class="icon"><use href="#m-layout"/></svg>优排</button>
                <button><svg class="icon"><use href="#m-zi"/></svg>特效字</button>
                <button><svg class="icon"><use href="#m-wen"/></svg>文字工具</button>
                <button><svg class="icon"><use href="#m-crystal"/></svg>矢量晶格</button>
                <button><svg class="icon"><use href="#m-dist"/></svg>增强分布</button>
                <button><svg class="icon"><use href="#m-line"/></svg>替换线条</button>
                <button><svg class="icon"><use href="#m-b"/></svg>扁平阴影</button>
                <button><svg class="icon"><use href="#m-book"/></svg>印刷拼版</button>
                <button><svg class="icon"><use href="#m-nodes"/></svg>结点对齐</button>
                <button><svg class="icon"><use href="#i-guides"/></svg>辅助线</button>
                <button><svg class="icon"><use href="#m-tea"/></svg>印前早茶</button>
                <button><svg class="icon"><use href="#m-num"/></svg>数码拼版</button>
                <button><svg class="icon"><use href="#m-repl"/></svg>颜色替换</button>
                <button><svg class="icon"><use href="#m-qr"/></svg>批量<span class="lt">QR</span></button>
            </div>
        </div>
        <i class="sep"></i>
        <button class="labelled"><svg class="icon"><use href="#i-curve"/></svg>转曲</button>
        <button class="labelled"><svg class="icon"><use href="#i-group"/></svg>智能群组</button>
        <button class="labelled"><svg class="icon"><use href="#i-pssmall"/></svg>一键<span class="lt">PS</span></button>
        <button class="labelled"><svg class="icon"><use href="#i-pic"/></svg>导出图片</button>
        <button class="labelled"><svg class="icon"><use href="#i-crop"/></svg>拼版角线</button>
        <button class="labelled"><svg class="icon black"><use href="#i-gear"/></svg>插件设置</button>
        <i class="sep"></i>
        <button class="labelled"><svg class="icon"><use href="#i-qundo"/></svg>极速撤销</button>
        <i class="sep"></i>
        <button class="labelled"><svg class="icon"><use href="#i-qredo"/></svg>极速重复</button>
    </div>

    <main class="workspace">
        <aside class="toolbox">
            <button class="on fly"><svg class="icon"><use href="#t-pick"/></svg></button>
            <button class="fly"><svg class="icon"><use href="#t-shape"/></svg></button>
            <hr>
            <button class="fly"><svg class="icon"><use href="#t-crop"/></svg></button>
            <button class="fly"><svg class="icon"><use href="#t-zoom"/></svg></button>
            <hr>
            <button class="fly"><svg class="icon"><use href="#t-free"/></svg></button>
            <button class="fly"><svg class="icon"><use href="#t-brush"/></svg></button>
            <button class="fly"><svg class="icon"><use href="#t-rect"/></svg></button>
            <button class="fly"><svg class="icon"><use href="#t-ell"/></svg></button>
            <button class="fly"><svg class="icon"><use href="#t-poly"/></svg></button>
            <hr>
            <button class="fly"><svg class="icon"><use href="#t-text"/></svg></button>
            <hr>
            <button class="fly"><svg class="icon"><use href="#t-dim"/></svg></button>
            <button class="fly"><svg class="icon"><use href="#t-conn"/></svg></button>
            <hr>
            <button class="fly"><svg class="icon"><use href="#t-shadow"/></svg></button>
            <button><svg class="icon"><use href="#t-check"/></svg></button>
            <hr>
            <button class="fly"><svg class="icon"><use href="#t-drop"/></svg></button>
            <button class="fly"><svg class="icon red"><use href="#t-fill"/></svg></button>
            <hr>
            <button><svg class="icon"><use href="#t-pen"/></svg></button>
            <hr>
            <button><svg class="icon"><use href="#i-plus"/></svg></button>
        </aside>

        <section class="document">
            <div class="doc-tabs">
                <button class="home"><svg class="icon"><use href="#i-home"/></svg></button>
                <button class="doc-tab">未命名 <span class="lt">-1</span></button>
                <button class="add-tab"><svg class="icon"><use href="#i-plus"/></svg></button>
            </div>
            <svg class="ruler-h" id="rulerH"></svg>
            <div class="doc-middle">
                <svg class="ruler-v" id="rulerV"></svg>
                <div class="canvas"><div class="page"></div></div>
                <div class="scroll-v">
                    <button class="chev"><svg viewBox="0 0 10 10"><path d="M1 7l4-4 4 4"/></svg></button>
                    <div class="track"><div class="thumb"></div></div>
                    <button class="chev"><svg viewBox="0 0 10 10"><path d="M1 3l4 4 4-4"/></svg></button>
                </div>
            </div>
            <div class="scroll-h">
                <svg class="ruler-end" viewBox="0 0 18 20"><text transform="translate(9 20) rotate(-90)" font-size="10">毫米</text></svg>
                <button class="chev"><svg viewBox="0 0 10 10"><path d="M7 1L3 5l4 4"/></svg></button>
                <div class="thumb"></div>
                <button class="chev"><svg viewBox="0 0 10 10"><path d="M3 1l4 4-4 4"/></svg></button>
                <button class="zoom-all"><svg class="icon-s"><use href="#i-zoomall"/></svg></button>
            </div>
            <div class="page-nav">
                <button><svg viewBox="0 0 14 14"><path d="M7 1v12M1 7h12" stroke="#333" stroke-width="2"/></svg></button>
                <button><svg viewBox="0 0 14 14"><path d="M2 1v12" stroke="#b0b0b0" stroke-width="1.500"/><path d="M12 1v12L4 7z" fill="#b0b0b0"/></svg></button>
                <button><svg viewBox="0 0 14 14"><path d="M11 1v12L3 7z" fill="#b0b0b0"/></svg></button>
                <span class="page-count"><span class="lt">1</span><span>的</span><span class="lt">1</span></span>
                <button><svg viewBox="0 0 14 14"><path d="M3 1v12l8-6z" fill="#b0b0b0"/></svg></button>
                <button><svg viewBox="0 0 14 14"><path d="M12 1v12" stroke="#b0b0b0" stroke-width="1.500"/><path d="M2 1v12l8-6z" fill="#b0b0b0"/></svg></button>
                <button><svg viewBox="0 0 14 14"><path d="M7 1v12M1 7h12" stroke="#333" stroke-width="2"/></svg></button>
                <button class="page-tab">页 <span class="lt">1</span></button>
            </div>
            <div class="doc-palette">
                <i class="grip"></i>
                <button><svg viewBox="0 0 14 14"><path d="M5 2v10l5-5z" fill="#666"/></svg></button>
                <button class="dropper"><svg class="icon-s"><use href="#t-drop"/></svg></button>
                <button><svg viewBox="0 0 14 14"><path d="M9 1L4 7l5 6" fill="none" stroke="#ccc" stroke-width="2"/></svg></button>
                <button class="no-color"></button>
                <p>将颜色(或对象)拖动至此处，以便将这些颜色与文档存储在一起</p>
                <button><svg viewBox="0 0 14 14"><path d="M4 2l5 5-5 5" fill="none" stroke="#ccc" stroke-width="2"/></svg></button>
                <button><svg viewBox="0 0 14 14"><path d="M2 2l4 5-4 5M7 2l4 5-4 5" fill="none" stroke="#b0b0b0" stroke-width="1.300"/></svg></button>
            </div>
        </section>

        <aside class="docker">
            <div class="docker-head">
                <h2>属性</h2>
                <button><svg viewBox="0 0 14 14"><path d="M0 1v12l7-6zM7 1v12l7-6z" fill="#b0b0b0"/></svg></button>
                <button><svg viewBox="0 0 14 14"><path d="M1 1l12 12M13 1L1 13" stroke="#b0b0b0" stroke-width="2"/></svg></button>
            </div>
            <div class="docker-main">
                <div class="docker-content">
                    <div class="docker-tools">
                        <button class="tool"><svg class="icon"><use href="#i-nib"/></svg></button>
                        <button class="tool"><svg class="icon orange"><use href="#t-fill"/></svg></button>
                        <button class="tool"><svg class="icon"><use href="#t-check"/></svg></button>
                        <span class="space"></span>
                        <button class="tool"><svg class="icon"><use href="#i-boxin"/></svg></button>
                        <i class="sep"></i>
                        <button class="tool"><svg class="icon"><use href="#i-boxeye"/></svg></button>
                    </div>
                    <div class="docker-scroll">
                        <div class="props">
                            <section class="group">
                                <h3>轮廓</h3>
                                <div class="rows">
                                    <div class="row"><div class="field w100"><span class="swatch"></span><button class="drop"></button></div></div>
                                    <div class="row">
                                        <div class="field w100"><span class="selected-text"><input type="text" value="0.2 mm" aria-label="轮廓宽度"></span><button class="drop"></button></div>
                                        <div class="select w125"><select aria-label="轮廓单位"><option>毫米</option></select></div>
                                    </div>
                                    <div class="row"><div class="field w230"><span class="line-style"></span><button class="drop"></button></div><button class="tool"><svg class="icon"><use href="#i-dots"/></svg></button></div>
                                    <div class="row"><button class="tool"><svg class="icon"><use href="#i-dash1"/></svg></button><button class="tool"><svg class="icon"><use href="#i-dash2"/></svg></button><button class="tool"><svg class="icon"><use href="#i-dash3"/></svg></button></div>
                                </div>
                            </section>

                            <section class="advanced">
                                <button class="collapse" aria-label="收起"></button>
                                <div class="rows">
                                    <div class="row"><label class="name" for="miter">斜接限制<span class="lt">(M)</span>：</label><div class="field w100"><input id="miter" type="text" value="5.0"><span class="spin"><button></button><button></button></span></div></div>
                                    <div class="row"><span class="name">角<span class="lt">(R)</span>：</span><button class="tool on"><svg class="icon"><use href="#i-cor1"/></svg></button><button class="tool"><svg class="icon"><use href="#i-cor2"/></svg></button><button class="tool"><svg class="icon"><use href="#i-cor3"/></svg></button></div>
                                    <div class="row"><span class="name">线条端头<span class="lt">(I)</span>：</span><button class="tool on"><svg class="icon"><use href="#i-cap1"/></svg></button><button class="tool"><svg class="icon"><use href="#i-cap2"/></svg></button><button class="tool"><svg class="icon"><use href="#i-cap3"/></svg></button></div>
                                    <div class="row"><span class="name">位置<span class="lt">(P)</span>：</span><button class="tool"><svg class="icon"><use href="#i-pos1"/></svg></button><button class="tool on"><svg class="icon"><use href="#i-pos2"/></svg></button><button class="tool"><svg class="icon"><use href="#i-pos3"/></svg></button></div>
                                </div>

                                <hr>
                                <h4 class="tight">箭头</h4>
                                <div class="rows arrows">
                                    <div class="row"><svg class="icon"><use href="#i-aleft"/></svg><div class="field w75"><span class="arrow-line end"></span><button class="drop"></button></div><button class="tool fly"><svg class="icon"><use href="#i-dots"/></svg></button></div>
                                    <div class="row"><svg class="icon"><use href="#i-aright"/></svg><div class="field w75"><span class="arrow-line"></span><button class="drop"></button></div><button class="tool fly"><svg class="icon"><use href="#i-dots"/></svg></button></div>
                                    <label class="check indent"><input type="checkbox">共享属性<span class="lt">(<u>H</u>)</span></label>
                                </div>

                                <hr>
                                <h4>变量轮廓 <button class="tool"><svg class="icon"><use href="#t-pen"/></svg></button></h4>
                                <div class="width-scale"><i></i><i></i><i></i><i></i><i></i></div>
                                <div class="rows disabled">
                                    <div class="row"><label class="name" for="vpos">位置<span class="lt">(P)</span>：</label><div class="field w62"><input id="vpos" type="text" value="0.0 %" disabled></div></div>
                                    <div class="row"><label class="name" for="side1">侧 <span class="lt">1</span>：</label><div class="field w100"><input id="side1" type="text" value="0.0 mm" disabled><span class="spin"><button disabled></button><button disabled></button></span></div></div>
                                    <div class="row"><label class="name" for="side2">侧 <span class="lt">2</span>：</label><div class="field w100"><input id="side2" type="text" value="0.0 mm" disabled><span class="spin"><button disabled></button><button disabled></button></span></div><svg class="lock"><use href="#i-lock"/></svg></div>
                                    <div class="row"><label class="name" for="total">总计：</label><div class="field w100"><input id="total" type="text" value="0.0 mm" disabled><span class="spin"><button disabled></button><button disabled></button></span></div></div>
                                    <label class="check scale-check"><input type="checkbox" disabled>用画笔缩放宽度</label>
                                </div>

                                <hr>
                                <h4>书法 <button class="tool"><svg class="icon"><use href="#i-reset"/></svg></button></h4>
                                <div class="calligraphy">
                                    <div class="rows">
                                        <div class="row"><svg class="icon"><use href="#i-stretch"/></svg><div class="field w116"><input type="text" value="100" aria-label="伸展"><span class="spin"><button></button><button></button></span></div></div>
                                        <div class="row"><svg class="icon"><use href="#i-tilt"/></svg><div class="field w116"><input type="text" value="0.0" aria-label="倾斜"><span class="spin"><button></button><button></button></span></div></div>
                                    </div>
                                    <div class="nib-preview"><span></span></div>
                                </div>
                                <div class="checks">
                                    <label class="check"><input type="checkbox">填充之后<span class="lt">(<u>B</u>)</span></label>
                                    <label class="check"><input type="checkbox">随对象缩放<span class="lt">(<u>S</u>)</span></label>
                                    <label class="check"><input type="checkbox">叠印轮廓<span class="lt">(<u>O</u>)</span></label>
                                </div>
                            </section>

                            <section class="group ruled">
                                <h3>填充</h3>
                                <div class="row fills"><button class="tool on"><svg class="icon"><use href="#i-f0"/></svg></button><button class="tool"><svg class="icon"><use href="#i-f1"/></svg></button><button class="tool"><svg class="icon"><use href="#i-f2"/></svg></button><button class="tool"><svg class="icon"><use href="#i-f3"/></svg></button><button class="tool"><svg class="icon"><use href="#i-f4"/></svg></button><button class="tool fly"><svg class="icon"><use href="#i-f5"/></svg></button></div>
                                <p class="fill-note">默认值不包含填充。</p>
                            </section>
                            <section class="group last">
                                <h3>透明度</h3>
                                <div class="select"><select aria-label="合并模式"><option>常规</option></select></div>
                            </section>
                        </div>
                        <div class="docker-bar">
                            <button class="chev"><svg viewBox="0 0 10 10"><path d="M1 7l4-4 4 4"/></svg></button>
                            <div class="thumb"></div>
                            <button class="chev"><svg viewBox="0 0 10 10"><path d="M1 3l4 4 4-4"/></svg></button>
                        </div>
                    </div>
                </div>
                <div class="docker-tabs">
                    <button class="objects"><svg class="icon-s"><use href="#i-layers"/></svg><span>对象 <span class="lt">(O)</span></span></button>
                    <button class="aligning"><svg class="icon-s"><use href="#i-align"/></svg><span>对齐与分布</span></button>
                    <button class="current"><svg class="icon-s orange"><use href="#t-fill"/></svg><span>属性</span></button>
                    <button class="more"><svg class="icon"><use href="#i-plus"/></svg></button>
                </div>
            </div>
        </aside>

        <aside class="palette">
            <i class="grip"></i>
            <button><svg viewBox="0 0 14 14"><path d="M5 2v10l5-5z" fill="#666"/></svg></button>
            <button><svg class="icon-s faded"><use href="#t-drop"/></svg></button>
            <button><svg viewBox="0 0 14 14"><path d="M2 10l5-5 5 5" fill="none" stroke="#ccc" stroke-width="2"/></svg></button>
            <div class="swatches" id="swatches"></div>
            <button><svg viewBox="0 0 14 14"><path d="M2 5l5 5 5-5" fill="none" stroke="#aaa" stroke-width="2"/></svg></button>
            <button><svg viewBox="0 0 14 14"><path d="M2 2l4 5-4 5M7 2l4 5-4 5" fill="none" stroke="#aaa" stroke-width="1.300"/></svg></button>
        </aside>
    </main>

    <footer class="statusbar">
        <button class="tool fly"><svg class="icon"><use href="#i-gear"/></svg></button>
        <p>接着单击可进行拖动或缩放；再单击可旋转或倾斜；双击工具，可选择所有对象；按住 <span class="lt">Shift</span> 键单击可选择多个对象；按住 <span class="lt">Alt</span> 键单击可进行挖掘</p>
        <div class="fill-info"><svg class="icon black"><use href="#t-fill"/></svg><span class="no-color"></span>无</div>
        <div class="line-info"><svg class="icon"><use href="#i-nib"/></svg><span class="swatch"></span><span class="cmyk"><b>C：</b><b>0</b><b>M：</b><b>0</b><b>Y：</b><b>0</b><b>K：</b><b>100</b></span></div>
        <div class="proof"><svg class="icon"><use href="#m-screen"/></svg></div>
    </footer>

    <!-- Windows taskbar -->
    <div class="taskbar">
        <button class="start"><svg viewBox="0 0 20 20"><path d="M0 3l8-1v7.500H0zM9 2l11-2v9.500H9zM0 10.500h8V18l-8-1zM9 10.500h11V20L9 18z" fill="#fff"/></svg></button>
        <label class="search"><svg viewBox="0 0 20 20"><circle cx="13" cy="7" r="6" fill="none" stroke="#222" stroke-width="1.500"/><path d="M9 11l-8 9" stroke="#222" stroke-width="1.500"/></svg><input type="text" placeholder="搜索" aria-label="搜索"></label>
        <div class="apps">
            <button><svg viewBox="0 0 32 32"><path d="M6 7v3h13V7M6 25v-3h13v3M6.500 12.500h12v7h-12zM25 7v4M25 18v8" fill="none" stroke="#fff" stroke-width="1.400"/><path d="M23.500 13h3v3h-3z" fill="#fff"/></svg></button>
            <button><svg viewBox="0 0 32 32"><path d="M3 4l3-3h18l2 3v18H3z" fill="#8bc172"/><path d="M6 3h15L9 20H3z" fill="#d9efcb"/><path d="M14 9l16-1v22l-25-2V19z" fill="#fff"/><path d="M17 13h4v4h-4zM23 13h5v4h-5zM17 19h4v4h-4zM23 19h5v4h-5zM8 24h7v3H8zM17 25h4v3h-4zM23 25h5v3h-5z" fill="#7ab45c"/><path d="M6 8l10 11M16 8L6 19" stroke="#1c6b23" stroke-width="3"/></svg></button>
            <button><svg viewBox="0 0 32 32"><path d="M4 1h24v30H4z" fill="#7c838d"/><path d="M7 4h18v6H7z" fill="#45c8f5"/><path d="M7 12h5v5H7zM13.500 12h5v5h-5zM20 12h5v4h-5zM7 18.500h5v5H7zM13.500 18.500h5v5h-5zM7 25h5v4H7zM13.500 25h5v4h-5z" fill="#dde2ea"/><path d="M20 18h5v11h-5z" fill="#155293"/></svg></button>
            <button class="running"><svg viewBox="0 0 32 32"><circle cx="16" cy="16" r="15" fill="url(#g-edge)"/><path d="M2 13C4-3 30-3 31 14c0 7-9 8-12 5 3-2 2-9-6-9-6 0-10 2-11 6z" fill="url(#g-edge2)"/><path d="M11 14c-4 7 2 16 15 13 2-1 3-3 3-4-7 3-15 0-13-7z" fill="#0b3f8a"/></svg></button>
            <button class="running"><svg viewBox="0 0 32 32"><path d="M1 4h12l3 3v6H1z" fill="#e2a313"/><path d="M1 8h30v20H1z" fill="#fcd462"/><path d="M7 29V20q0-3 3-3h13q3 0 3 3v9h-5v-5h-9v5z" fill="#3c96dc"/></svg></button>
            <button><svg viewBox="0 0 32 32"><path d="M4 1h19l5 5v25H4z" fill="#fff" stroke="#222"/><path d="M8 6v21M12 6v21M16 6v21M20 8v19M24 8v19" stroke="#4f55e0" stroke-width="2.500" stroke-dasharray="2 1"/></svg></button>
            <button><svg viewBox="0 0 32 32"><path d="M2 3h28v26H2z" fill="#150b52" stroke="#7ab8ff" stroke-width="2"/><text x="7" y="21" font-size="15" font-weight="bold" fill="#84bdf8">Ps</text></svg></button>
            <button><svg viewBox="0 0 32 32"><path d="M2 3h28v26H2z" fill="#271303" stroke="#ff9a2a" stroke-width="2"/><text x="8" y="21" font-size="15" font-weight="bold" fill="#ffa640">Ai</text></svg></button>
            <button class="running"><svg viewBox="0 0 32 32"><rect x="1" y="1" width="30" height="30" rx="6" fill="#fff"/><use href="#i-qq" x="5" y="3" width="24" height="26"/></svg></button>
            <button><svg viewBox="0 0 32 32"><path d="M2 3h28v27H2z" fill="#f5f5f5" stroke="#bbb"/><path d="M7 25c4-2 8-10 8-18 0-3 2-3 2 0 0 6 5 13 9 13 2 0 1-3-2-3-6 0-12 3-15 6-2 2-3 4-2 2z" fill="none" stroke="#e0292b" stroke-width="1.500"/></svg></button>
            <button><svg viewBox="0 0 32 32"><circle cx="16" cy="16" r="15" fill="#eee"/><circle cx="16" cy="16" r="12.500" fill="#2f6bf0"/><circle cx="16" cy="16" r="5.500" fill="#fff"/><path d="M17 17h6v5q-5-1-6-5z" fill="#2f6bf0"/></svg></button>
            <button class="running"><svg viewBox="0 0 32 32"><rect x="2" y="2" width="28" height="27" rx="5" fill="#330000"/><text x="8" y="21" font-size="15" font-weight="bold" fill="#ff9a00">Ai</text></svg></button>
            <button class="running active"><svg viewBox="0 0 20 20"><use href="#i-corel"/></svg></button>
            <button class="running"><svg viewBox="0 0 32 32"><path d="M10 3l17 3-3 24-12-1z" fill="#c9a96a"/><path d="M9 2l17 2-5 24-18-5z" fill="url(#g-glass)"/></svg></button>
            <button class="running"><svg viewBox="0 0 32 32"><rect x="1" y="1" width="30" height="30" rx="6" fill="#fff"/><circle cx="16" cy="11" r="4.500" fill="none" stroke="#2f8ff0" stroke-width="3"/><circle cx="10" cy="19" r="4.500" fill="none" stroke="#22b6f5" stroke-width="3"/><circle cx="22" cy="19" r="4.500" fill="none" stroke="#1f9cf0" stroke-width="3"/><circle cx="16" cy="14" r="2.500" fill="#f0466b"/><path d="M11 29h5v2h-5z" fill="#f0466b"/><path d="M16 29h5v2h-5z" fill="#1f9cf0"/></svg></button>
        </div>
        <div class="tray">
            <button><svg viewBox="0 0 20 20"><path d="M2 14l8-8 8 8" fill="none" stroke="#fff" stroke-width="1.500"/></svg></button>
            <button><svg viewBox="0 0 20 20"><circle cx="10" cy="10" r="10" fill="#fb2a2d"/><path d="M4 8v5h3M7 6v7M10 8v5M13 7v6M16 7v4l-2 3" stroke="#fff" stroke-width="2" fill="none"/></svg></button>
            <button><svg viewBox="0 0 20 20"><use href="#i-qq"/><circle cx="15" cy="15" r="5" fill="#20df7c"/></svg></button>
            <button><svg viewBox="0 0 20 20"><use href="#i-qq"/><circle cx="15" cy="15" r="5" fill="#20df7c"/></svg></button>
            <button><svg viewBox="0 0 20 20"><path d="M5 3h14v11H3V9M1 3h4v4H1zM3 7v2M10 14v3M6 17.500h9" fill="none" stroke="#fff" stroke-width="1.200"/></svg></button>
            <button><svg viewBox="0 0 20 20"><path d="M1 4l18-3v16l-18-1z M6 10a4 4 0 0 1 7-3M14 10a4 4 0 0 1-7 3M13 4v3h-3M7 16v-3h3" fill="none" stroke="#fff" stroke-width="1.200"/><circle cx="16" cy="15.500" r="4.500" fill="#ee1122"/></svg></button>
            <button><svg viewBox="0 0 20 20"><path d="M1 7h3l4-4v14l-4-4H1zM11 8q1 2 0 4" fill="none" stroke="#fff" stroke-width="1.200"/><path d="M14 5q3 5 0 10M17 3q4 7 0 14" fill="none" stroke="#999" stroke-width="1.200"/></svg></button>
            <span class="ime">英</span>
            <span class="ime-mode">五</span>
            <div class="clock">12:44<br>2025/3/29</div>
            <button class="notice"><svg viewBox="0 0 20 20"><path d="M1 1h18v14H8l-4 4v-4H1z" fill="#fff"/><path d="M4 5h12M4 8h12M4 11h8" stroke="#555"/></svg></button>
            <i class="show-desktop"></i>
        </div>
    </div>

    <!-- Floating overlays -->
    <button class="upload"><span><svg><use href="#i-cloud3"/></svg></span>拖拽至此上传</button>
    <div class="stamp">
        <svg viewBox="0 0 34 32"><path d="M1 2q8 3 8 10h16q0-7 8-10-3 7-6 12l4 16h-6l-1-8q-3-3-4 0v8h-3v-9q-2-2-3 0v9h-4v-8q-2-2-3 0l-1 8H1l5-16Q3 9 1 2z" fill="#b52025"/></svg>
        <div><strong>華印社區</strong><em>www.52cnp.com</em></div>
    </div>

    <script>
        const NS = 'http://www.w3.org/2000/svg';
        const PX_PER_MM = 2.845;

        function svgAdd(parent, name, attrs, text) {
            const el = document.createElementNS(NS, name);
            for (const key in attrs) el.setAttribute(key, attrs[key]);
            if (text !== undefined) el.textContent = text;
            parent.appendChild(el);
        }

        // Tick length for a position in millimetres
        function tickLength(mm) {
            if (mm % 20 === 0) return 5;
            return mm % 10 === 0 ? 2 : 1;
        }

        function drawRulers() {
            const h = document.getElementById('rulerH');
            const v = document.getElementById('rulerV');
            h.innerHTML = '';
            v.innerHTML = '';
            const zeroX = 754;
            const zeroY = 951;
            const width = h.clientWidth;
            const height = v.clientHeight;

            svgAdd(h, 'path', { d: 'M5 6h11M8 3v11M8 6l7 7', stroke: '#999', 'stroke-dasharray': '2 1', fill: 'none' });
            for (let mm = -400; mm <= 600; mm += 2) {
                const x = Math.round(zeroX + mm * PX_PER_MM);
                if (x < 20 || x > width - 6) continue;
                const len = tickLength(mm);
                svgAdd(h, 'rect', { x: x, y: 15 - len, width: 1, height: len, fill: '#8c8c8c' });
                if (len === 5 && x < width - 30) svgAdd(h, 'text', { x: x, y: 9, 'text-anchor': 'middle' }, Math.abs(mm));
            }
            svgAdd(h, 'text', { x: width - 24, y: 9 }, '毫米');

            for (let mm = -200; mm <= 500; mm += 2) {
                const y = Math.round(zeroY - mm * PX_PER_MM);
                if (y < 2 || y > height) continue;
                const len = tickLength(mm);
                svgAdd(v, 'rect', { x: 15 - len, y: y, width: len, height: 1, fill: '#8c8c8c' });
                if (len === 5 && y < height - 10) svgAdd(v, 'text', { transform: 'translate(9 ' + y + ') rotate(-90)', 'text-anchor': 'middle' }, Math.abs(mm));
            }
        }
        drawRulers();
        window.addEventListener('resize', drawRulers);

        // Colour palette
        const colors = ['#231a15', '#3b3535', '#585656', '#6e6e6e', '#878787', '#9c9e9d', '#b2b4b3', '#c8cac9', '#dcdcdc', '#eeeeee', '#ffffff',
            '#1d1f88', '#009fe9', '#009c44', '#fff100', '#e60012', '#e5007f', '#af4283', '#f08300', '#f4afb1', '#887369', '#cfcce6', '#a69bcc',
            '#708cc9', '#7a6bb0', '#9085b0', '#506590', '#58506f', '#7387a3', '#008cda', '#9fd7f5', '#b7cdda', '#98a9b1', '#728088', '#4a5259',
            '#537472', '#458d7c', '#739a98', '#56a995', '#5aa672', '#5cc0d0', '#4ea7b5', '#b8ccbd', '#d5ead9', '#a3d5ad', '#97a79a', '#98a47a',
            '#b8c570', '#b8c998'];
        const swatches = document.getElementById('swatches');
        const none = document.createElement('button');
        none.className = 'no-color';
        swatches.appendChild(none);
        colors.forEach(color => {
            const b = document.createElement('button');
            b.style.backgroundColor = color;
            swatches.appendChild(b);
        });
    </script>
</body>
</html>
```

FILE: styles.css
```css
* {
    box-sizing: border-box;
}
body {
    margin: 0;
    height: 100vh;
    display: flex;
    flex-direction: column;
    overflow: hidden;
    background-color: #f3f3f3;
    color: #000;
    font: 16px/20px "Noto Sans", "Noto Sans CJK SC", sans-serif;
}
button {
    margin: 0;
    padding: 0;
    border: none;
    background: none;
    color: inherit;
    font: inherit;
    white-space: nowrap;
    cursor: pointer;
}
input, select {
    min-width: 0;
    margin: 0;
    border: none;
    outline: none;
    background: none;
    color: #000;
    font: 12px/20px "Noto Sans", "Noto Sans CJK SC", sans-serif;
}
h1, h2, h3, h4, p {
    margin: 0;
    font-size: 16px;
    font-weight: normal;
}
svg {
    display: block;
    flex: none;
}
.paints {
    position: absolute;
    width: 0;
    height: 0;
}
.sprite {
    display: none;
}
.lt {
    font-size: 13px;
}
.icon {
    width: 20px;
    height: 20px;
    color: #333;
}
.icon-s {
    width: 16px;
    height: 16px;
}
.green { color: #0a9a3a; }
.purple { color: #9410d0; }
.blue { color: #0a14ff; }
.red { color: #f5131b; }
.orange { color: #ff6a00; }
.black { color: #000; }
.faded { opacity: 0.4; }

/* Title and menus */
.titlebar {
    display: flex;
    align-items: center;
    height: 26px;
    padding-left: 3px;
    gap: 8px;
    background-color: #fff;
}
.titlebar h1 {
    flex: 1;
}
.window-buttons {
    display: flex;
    gap: 20px;
    padding-right: 7px;
}
.window-buttons .icon-s {
    width: 14px;
    height: 14px;
}
.window-buttons .account {
    margin-right: 6px;
}
.menubar {
    display: flex;
    height: 25px;
    background-color: #d7d7d7;
}
.menubar button {
    padding: 0 14px;
}

/* Toolbars */
.toolbar {
    display: flex;
    align-items: center;
    gap: 5px;
    height: 36px;
    padding-left: 4px;
    border-bottom: 1px solid #d4d4d4;
}
.property-bar {
    height: 53px;
}
.tool {
    flex: none;
    width: 28px;
    height: 28px;
    display: flex;
    align-items: center;
    justify-content: center;
    position: relative;
}
.on {
    border: 1px solid #b0b0b0;
    background-color: #fff;
}
.off .icon {
    color: #b8b8b8;
}
.cloud {
    background-color: #b8b8b8;
}
.fly {
    position: relative;
}
.fly::after {
    content: "";
    position: absolute;
    right: 0;
    bottom: 0;
    border: 3px solid transparent;
    border-right-color: #777;
    border-bottom-color: #777;
}
.sep {
    flex: none;
    width: 1px;
    height: 28px;
    margin-right: 2px;
    background-color: #d4d4d4;
}
.sep.flush {
    margin: 0 1px;
}
.sep.wide {
    margin-right: 5px;
}
.sep.both {
    margin-left: 4px;
}
.property-bar .sep {
    height: 50px;
}
.split {
    display: flex;
    position: relative;
}
.drop {
    flex: none;
    width: 20px;
    display: flex;
    align-items: center;
    justify-content: center;
}
.drop::after, .select::after {
    content: "";
    border: 5px solid transparent;
    border-top-color: #777;
    border-bottom: none;
}
.drop.off::after {
    border-top-color: #ccc;
}
.labelled {
    display: flex;
    align-items: center;
    height: 28px;
    padding: 0 15px 0 4px;
}
.labelled .icon {
    margin-right: 9px;
}
.labelled.first {
    margin-right: 3px;
}
.text-tool {
    padding: 0 8px 0 6px;
}

/* Fields */
.field {
    display: flex;
    height: 28px;
    border: 1px solid #b0b0b0;
    background-color: #fff;
}
.field input {
    flex: 1;
    width: 0;
    padding: 0 4px;
}
.field .drop {
    width: 22px;
    border-left: 1px solid #b0b0b0;
    background-color: #e9e9e9;
}
.spin {
    width: 22px;
    display: flex;
    flex-direction: column;
    border-left: 1px solid #b0b0b0;
    background-color: #e9e9e9;
}
.spin button {
    flex: 1;
    display: flex;
    align-items: center;
    justify-content: center;
}
.spin button::after, .step::after {
    content: "";
    border: 3px solid transparent;
    border-top: none;
    border-bottom-color: #666;
}
.spin button + button::after, .step.down::after {
    border: 3px solid transparent;
    border-bottom: none;
    border-top-color: #666;
}
.step {
    width: 15px;
    display: flex;
    align-items: center;
    justify-content: center;
    background-color: #e9e9e9;
}
.step.down {
    border-left: 1px solid #b0b0b0;
}
.select {
    display: grid;
    align-items: center;
    height: 28px;
    border: 1px solid #b0b0b0;
    background-color: #e9e9e9;
}
.select select, .select::after {
    grid-area: 1 / 1;
}
.select select {
    appearance: none;
    width: 100%;
    height: 100%;
    padding: 0 4px;
    font-size: 16px;
}
.select::after {
    justify-self: end;
    margin-right: 4px;
    pointer-events: none;
}
.page-size {
    width: 200px;
}
.page-size select {
    font-size: 12px;
}
.units {
    width: 127px;
}
.property-bar label {
    margin-right: -4px;
}
.zoom-level {
    width: 107px;
}
.nudge {
    width: 100px;
    margin-left: -2px;
}
.pair {
    display: flex;
    gap: 2px;
    margin-left: 2px;
}
.pair-icons {
    display: flex;
    flex-direction: column;
    gap: 2px;
    padding-top: 1px;
}
.pair-fields {
    width: 121px;
}
.pair-fields .field {
    height: 19px;
}
.pair-fields .field + .field {
    margin-top: -1px;
}

/* Plugin drop-down */
.split.open {
    background-color: #dff0ff;
    outline: 1px solid #15a2ee;
    outline-offset: -1px;
}
.dropdown {
    position: absolute;
    z-index: 10;
    top: 29px;
    left: -1px;
    width: 186px;
    padding: 2px 0;
    border: 1px solid #b0b0b0;
    background: linear-gradient(to right, #f3f3f3 30px, #fff 30px);
}
.dropdown button {
    display: flex;
    align-items: center;
    width: 100%;
    height: 26px;
    padding-left: 5px;
}
.dropdown .icon {
    margin-right: 13px;
}

/* Workspace */
.workspace {
    flex: 1;
    min-height: 0;
    display: flex;
}
.toolbox {
    width: 36px;
    display: flex;
    flex-direction: column;
    padding-top: 2px;
    border-right: 1px solid #d4d4d4;
}
.toolbox button {
    display: flex;
    align-items: center;
    justify-content: center;
    width: 28px;
    height: 28px;
    margin: 2px 4px 3px;
}
.toolbox hr {
    height: 1px;
    margin: 3px 3px 4px 4px;
    border: none;
    background-color: #d4d4d4;
}
.document {
    flex: 1;
    min-width: 0;
    display: flex;
    flex-direction: column;
}
.doc-tabs {
    display: flex;
    height: 26px;
    border-bottom: 1px solid #16a5e8;
    background-color: #e9e9e9;
}
.doc-tabs button {
    display: flex;
    align-items: center;
    gap: 4px;
    padding: 0 6px;
}
.doc-tabs .home, .doc-tabs .add-tab {
    width: 25px;
    padding: 0 1px;
    background-color: #dadada;
}
.doc-tabs .doc-tab {
    width: 119px;
    margin-left: 1px;
    background-color: #cce3ff;
}
.ruler-h {
    width: 100%;
    height: 18px;
    border-bottom: 1px solid #d4d4d4;
}
.ruler-h, .ruler-v, .ruler-end {
    font: 10px "Liberation Sans", "Noto Sans CJK SC", sans-serif;
    fill: #8c8c8c;
}
.doc-middle {
    flex: 1;
    min-height: 0;
    display: flex;
}
.ruler-v {
    width: 18px;
    height: 100%;
    border-right: 1px solid #d4d4d4;
}
.canvas {
    flex: 1;
    position: relative;
    overflow: hidden;
    background-color: #fff;
}
.page {
    position: absolute;
    left: 736px;
    top: 106px;
    width: 598px;
    height: 845px;
    border: 1px solid #b0b0b0;
    background-color: #fff;
    box-shadow: 5px 4px 0 #c0c0c0;
}
.chev {
    flex: none;
    display: flex;
    align-items: center;
    justify-content: center;
    width: 19px;
    height: 20px;
    background-color: #f0f0f0;
}
.chev svg {
    width: 10px;
    height: 10px;
    fill: none;
    stroke: #555;
    stroke-width: 2;
}
.thumb {
    background-color: #cdcdcd;
}
.scroll-v {
    display: flex;
    flex-direction: column;
    width: 19px;
    background-color: #fff;
}
.scroll-v .track {
    flex: 1;
    padding: 226px 1px 225px 0;
}
.scroll-v .thumb {
    height: 100%;
}
.scroll-h {
    display: flex;
    height: 20px;
    border-bottom: 1px solid #d4d4d4;
}
.scroll-h .chev {
    width: 21px;
    height: 18px;
}
.scroll-h .thumb {
    flex: 1;
    height: 18px;
}
.ruler-end {
    width: 18px;
    height: 20px;
    overflow: visible;
    border-right: 1px solid #d4d4d4;
}
.zoom-all {
    width: 19px;
    padding-left: 2px;
}
.page-nav {
    display: flex;
    align-items: center;
    height: 28px;
    border-bottom: 1px solid #d4d4d4;
}
.page-nav button {
    width: 27px;
    display: flex;
    justify-content: center;
}
.page-nav svg, .doc-palette svg, .docker-head svg, .palette svg {
    width: 14px;
    height: 14px;
}
.page-nav button:first-child svg {
    margin-right: 1px;
}
.page-count {
    width: 59px;
    display: flex;
    align-items: baseline;
    justify-content: center;
    gap: 7px;
    color: #666;
}
.page-nav .page-tab {
    width: 125px;
    height: 27px;
    align-items: center;
    gap: 4px;
    background-color: #d7d7d7;
}
.doc-palette {
    display: flex;
    align-items: center;
    height: 24px;
    padding-right: 5px;
}
.doc-palette button {
    width: 22px;
    display: flex;
    justify-content: center;
}
.doc-palette .dropper svg {
    width: 18px;
    height: 18px;
}
.grip {
    width: 7px;
    height: 20px;
    background: radial-gradient(circle, #aaa 0.5px, transparent 1px) 0 0 / 4px 4px;
}
.no-color {
    width: 22px;
    height: 22px;
    border: 1px solid #555;
    background: linear-gradient(to bottom right, #fff 48%, #ff3b30 48%, #ff3b30 52%, #fff 52%);
}
.doc-palette p {
    flex: 1;
    padding-left: 22px;
    text-align: center;
    font-style: italic;
    color: #aaa;
}
.doc-palette .no-color {
    margin-left: 3px;
}

/* Docker */
.docker {
    flex: none;
    width: 395px;
    display: flex;
    flex-direction: column;
    border-left: 2px solid #fff;
    border-right: 1px solid #d4d4d4;
    box-shadow: inset 1px 0 #d4d4d4;
    padding-left: 3px;
}
.docker-head {
    display: flex;
    align-items: center;
    gap: 10px;
    height: 28px;
    padding: 0 7px 0 6px;
    border-bottom: 1px solid #b0b0b0;
    background-color: #e9e9e9;
}
.docker-head h2 {
    flex: 1;
}
.docker-main {
    flex: 1;
    min-height: 0;
    display: flex;
}
.docker-content {
    flex: 1;
    display: flex;
    flex-direction: column;
    border-right: 1px solid #b0b0b0;
}
.docker-tools {
    display: flex;
    align-items: center;
    gap: 5px;
    height: 32px;
    padding-left: 1px;
    background-color: #e9e9e9;
}
.docker-tools .space {
    flex: 1;
}
.docker-tools .sep {
    margin: 0 -2px;
}
.docker-scroll {
    flex: 1;
    min-height: 0;
    display: flex;
    overflow: hidden;
}
.props {
    flex: 1;
    border-right: 1px solid #fff;
}
.group {
    padding: 0 4px 16px;
}
.group h3 {
    display: flex;
    align-items: center;
    gap: 11px;
    height: 24px;
    margin-bottom: 8px;
    padding-left: 6px;
    font-size: 17px;
    font-weight: bold;
}
.group h3::before, .collapse::after {
    content: "";
    border: 5px solid transparent;
    border-top: none;
    border-bottom-color: #777;
}
.rows {
    display: flex;
    flex-direction: column;
    gap: 5px;
}
.row {
    display: flex;
    align-items: center;
    gap: 5px;
    height: 28px;
}
.w62 { width: 62px; }
.w75 { width: 75px; }
.w100 { width: 100px; }
.w116 { width: 116px; }
.w125 { width: 125px; }
.w230 { width: 230px; }
.field .swatch {
    flex: 1;
    margin: 3px;
    background-color: #231a15;
}
.selected-text {
    flex: 1;
    display: flex;
    align-items: center;
    padding-left: 4px;
}
.selected-text input {
    flex: none;
    width: 44px;
    height: 17px;
    padding: 0;
    background-color: #0078d7;
    color: #fff;
}
.line-style {
    flex: 1;
    height: 14px;
    border-bottom: 1px solid #000;
}
.advanced {
    padding: 0 4px 9px;
    background-color: #e9e9e9;
}
.collapse {
    display: flex;
    align-items: center;
    justify-content: center;
    width: 100%;
    height: 21px;
}
.name {
    width: 115px;
    display: flex;
    justify-content: flex-end;
    align-items: baseline;
    white-space: pre;
}
.advanced hr {
    height: 1px;
    margin: 16px 0 0;
    border: none;
    background-color: #d4d4d4;
}
.advanced h4 {
    display: flex;
    align-items: center;
    justify-content: space-between;
    height: 24px;
    margin: 17px 0 12px;
}
.advanced h4.tight {
    margin: 11px 0 10px;
}
.arrows .icon, .calligraphy .row > .icon {
    margin: 0 -1px;
}
.arrow-line {
    width: 14px;
    height: 2px;
    align-self: center;
    margin-right: auto;
    background-color: #000;
}
.arrow-line.end {
    margin: 0 0 0 auto;
}
.check {
    display: flex;
    align-items: center;
    height: 16px;
}
.check input {
    appearance: none;
    width: 16px;
    height: 16px;
    margin-right: 3px;
    border: 1px solid #b0b0b0;
    background-color: #fff;
}
.check.indent {
    margin-left: 23px;
}
.width-scale {
    display: flex;
    justify-content: space-between;
    height: 31px;
    margin: 0 35px 19px 6px;
    background: linear-gradient(#b0b0b0, #b0b0b0) center / 100% 5px no-repeat;
}
.width-scale i {
    width: 2px;
    background-color: #b0b0b0;
}
.disabled {
    color: #ccc;
}
.disabled .name {
    width: 78px;
}
.disabled .field, .disabled .spin, .disabled .check input {
    border-color: #ccc;
    background-color: #e9e9e9;
}
.disabled .spin, .disabled .check input {
    background-color: #f3f3f3;
}
.disabled input {
    color: #6d6d6d;
}
.disabled .spin button {
    opacity: 0.4;
}
.lock {
    width: 16px;
    height: 16px;
    align-self: flex-start;
    margin: -10px 0 0 3px;
}
.scale-check {
    margin-top: 9px;
}
.scale-check input {
    margin-right: 6px;
}
.calligraphy {
    display: flex;
    gap: 5px;
    padding-top: 4px;
}
.nib-preview {
    display: flex;
    align-items: center;
    justify-content: center;
    width: 64px;
    height: 61px;
    border: 1px solid #b0b0b0;
    background-color: #fff;
}
.nib-preview span {
    width: 43px;
    height: 42px;
    background-color: #231a15;
}
.checks {
    display: flex;
    flex-direction: column;
    gap: 6px;
    margin-top: 5px;
}
.ruled {
    margin-top: 6px;
    padding: 0 0 8px;
    border-top: 2px solid #e6e6e6;
    border-bottom: 2px solid #e6e6e6;
}
.ruled h3 {
    margin: 1px 4px 7px;
}
.fills {
    height: 34px;
    padding-bottom: 6px;
    margin: 0 4px;
    border-bottom: 1px solid #d4d4d4;
}
.fill-note {
    padding: 9px 4px 0;
}
.last h3 {
    margin: 1px 0 7px;
}
.docker-bar {
    display: flex;
    flex-direction: column;
    width: 20px;
}
.docker-bar .thumb {
    flex: 1;
    margin-right: 1px;
    margin-bottom: 64px;
}
.docker-tabs {
    display: flex;
    flex-direction: column;
    width: 25px;
    background-color: #e9e9e9;
}
.docker-tabs button {
    display: flex;
    flex-direction: column;
    align-items: center;
    gap: 8px;
    padding-top: 5px;
    background-color: #d7d7d7;
}
.docker-tabs span {
    writing-mode: vertical-rl;
    text-orientation: sideways;
}
.docker-tabs .objects {
    height: 116px;
    gap: 10px;
}
.docker-tabs .aligning {
    height: 139px;
    gap: 10px;
}
.docker-tabs .current {
    height: 90px;
    gap: 10px;
    background-color: #b0b0b0;
}
.docker-tabs .more {
    background: none;
}

/* Colour palette */
.palette {
    flex: none;
    width: 24px;
    display: flex;
    flex-direction: column;
    align-items: center;
}
.palette .grip {
    width: 20px;
    height: 8px;
}
.palette > button {
    height: 23px;
    display: flex;
    align-items: center;
}
.palette .swatches {
    width: 22px;
    height: 1047px;
    display: flex;
    flex-direction: column;
    border: 1px solid #555;
    border-bottom: none;
}
.swatches button {
    flex: 1;
    border-bottom: 1px solid #555;
}
.swatches .no-color {
    width: 20px;
    height: auto;
    border-width: 0 0 1px;
}

/* Status bar */
.statusbar {
    display: flex;
    align-items: center;
    height: 42px;
    padding-left: 7px;
    border-top: 1px solid #d4d4d4;
}
.statusbar p {
    flex: 1;
    padding-left: 5px;
    white-space: nowrap;
}
.fill-info, .line-info {
    display: flex;
    align-items: center;
}
.fill-info {
    width: 254px;
    gap: 4px;
}
.line-info {
    width: 303px;
    gap: 1px;
}
.line-info .swatch {
    width: 26px;
    height: 26px;
    border: 1px solid #b0b0b0;
    background-color: #231a15;
}
.fill-info .no-color {
    width: 26px;
    height: 26px;
}
.cmyk {
    display: flex;
    gap: 4px;
    padding-left: 4px;
    font-size: 12px;
}
.cmyk b {
    min-width: 8px;
    font-weight: normal;
}
.cmyk b:nth-child(odd) {
    width: 25px;
}
.proof {
    width: 42px;
    padding: 4px 10px;
    border-left: 1px solid #d4d4d4;
}

/* Taskbar */
.taskbar {
    display: flex;
    height: 50px;
    background: linear-gradient(to right, #444 27%, #4b2323 31%, #4b2525 40%, #454545 44%, #464545 90%, #3c3432);
    color: #fff;
}
.start {
    width: 60px;
    background-color: #35261f;
}
.start svg, .search svg {
    width: 20px;
    height: 20px;
    margin: auto;
}
.search {
    display: flex;
    align-items: center;
    width: 361px;
    padding-left: 15px;
    border: 1px solid #bbb;
    background-color: #f1f1f1;
}
.search input {
    flex: 1;
    padding-left: 14px;
    font-size: 19px;
}
.search input::placeholder {
    color: #333;
}
.apps {
    flex: 1;
    display: flex;
}
.apps button {
    width: 62px;
    display: flex;
    align-items: center;
    justify-content: center;
    position: relative;
}
.apps svg {
    width: 30px;
    height: 30px;
}
.running::after {
    content: "";
    position: absolute;
    left: 6px;
    right: 6px;
    bottom: 0;
    height: 3px;
    background-color: #76b9ed;
}
.active {
    background-color: #6b6b6b;
}
.active::after {
    left: 0;
    right: 0;
}
.tray {
    display: flex;
    align-items: center;
}
.tray button {
    width: 30px;
    display: flex;
    justify-content: center;
}
.tray svg {
    width: 20px;
    height: 20px;
}
.ime {
    width: 28px;
    font-size: 20px;
    text-align: center;
}
.ime-mode {
    width: 20px;
    height: 20px;
    margin: 0 8px 0 11px;
    background-color: #fff;
    color: #000;
    text-align: center;
}
.clock {
    width: 102px;
    text-align: center;
    font-size: 15px;
    line-height: 24px;
}
.tray .notice {
    width: 56px;
}
.show-desktop {
    width: 6px;
    height: 50px;
    border-left: 1px solid #888;
}

/* Overlays */
.upload {
    position: absolute;
    top: 143px;
    right: 213px;
    display: flex;
    align-items: center;
    width: 162px;
    height: 47px;
    gap: 9px;
    overflow: hidden;
    border: 1px solid #0b93ff;
    border-radius: 8px;
    background-color: #eff8ff;
    color: #0a9bff;
    font-weight: bold;
}
.upload span {
    display: flex;
    align-items: center;
    justify-content: center;
    width: 45px;
    height: 45px;
    border-radius: 8px;
    background: linear-gradient(to top right, #30b0ff, #0a90ff 50%);
}
.upload svg {
    width: 28px;
    height: 28px;
}
.stamp {
    position: absolute;
    right: 2px;
    bottom: 0;
    display: flex;
    align-items: flex-end;
    gap: 4px;
    pointer-events: none;
}
.stamp svg {
    width: 34px;
    height: 32px;
    margin-bottom: 4px;
}
.stamp strong, .stamp em {
    display: block;
}
.stamp strong {
    font: bold 21px/22px "Noto Sans CJK TC", serif;
    color: #c98a3c;
}
.stamp em {
    font: italic bold 11px/14px "Liberation Sans", sans-serif;
    color: #aaa;
}
```
